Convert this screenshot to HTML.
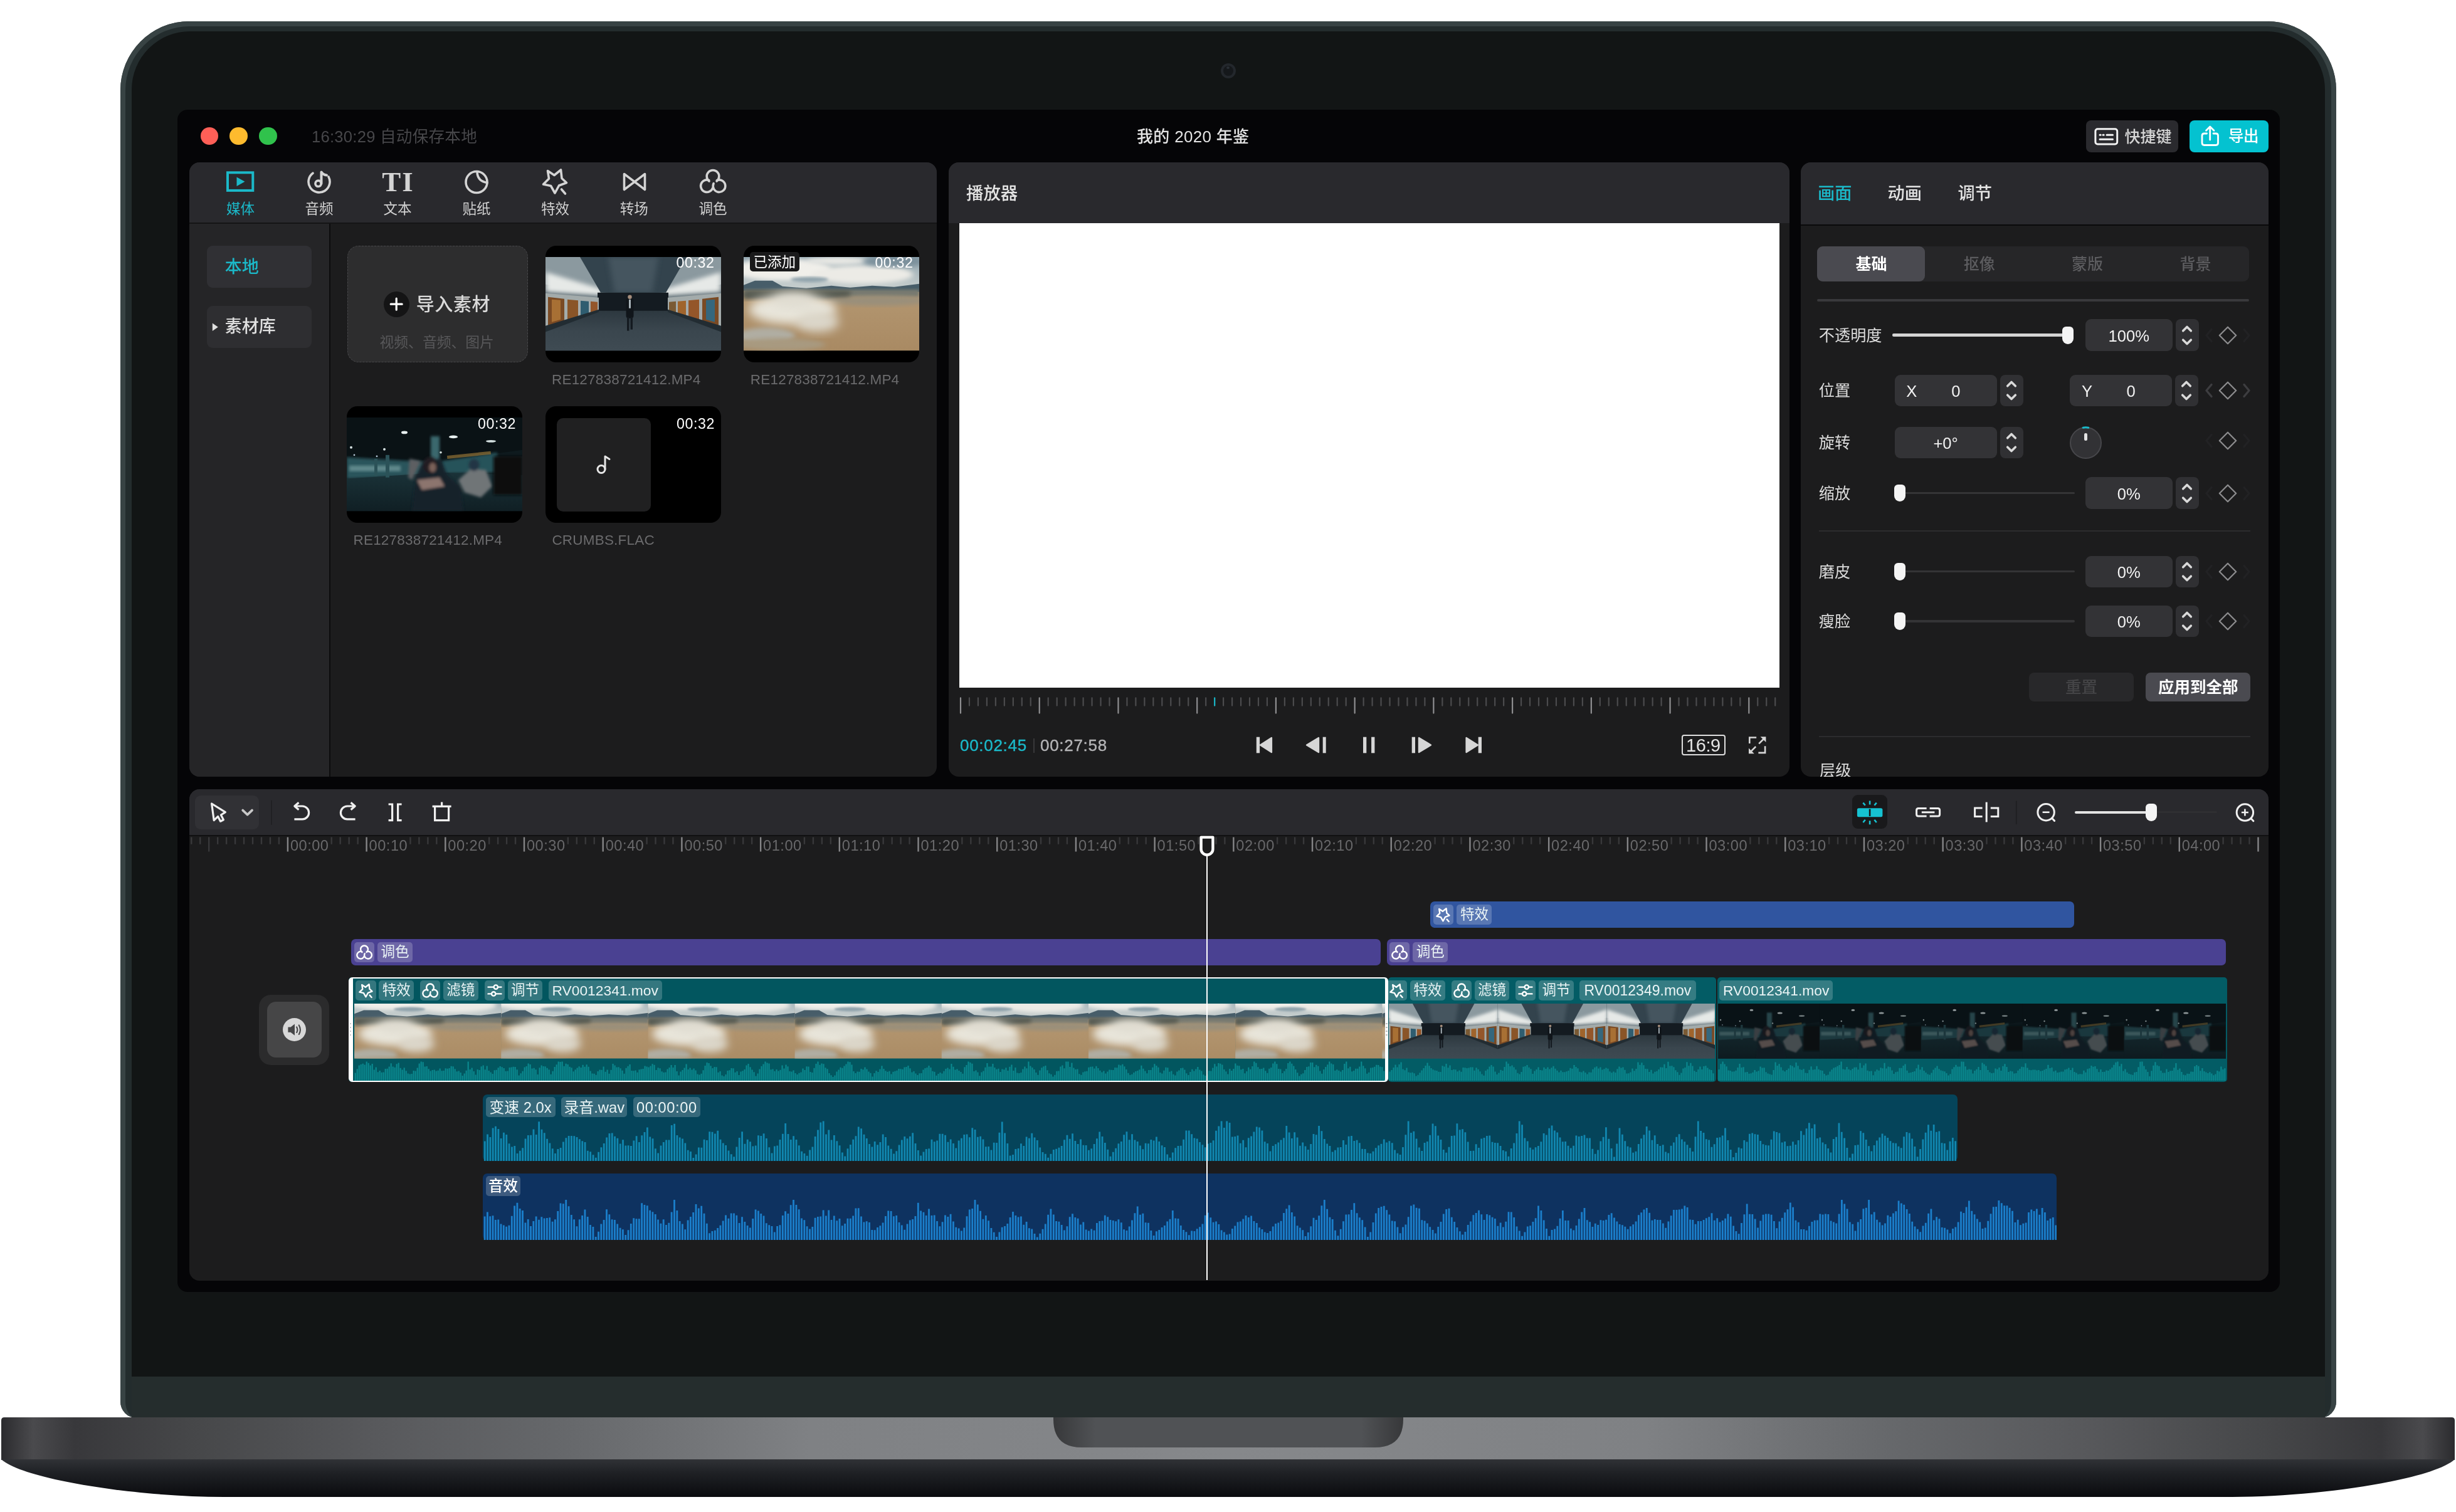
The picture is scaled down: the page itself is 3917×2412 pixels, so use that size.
<!DOCTYPE html>
<html lang="zh-CN"><head><meta charset="utf-8"><title>我的 2020 年鉴</title>
<style>
html,body{margin:0;padding:0;background:#fff;}
#root{position:relative;width:3917px;height:2412px;overflow:hidden;background:transparent;will-change:transform;font-family:"Liberation Sans","Noto Sans CJK SC",sans-serif;}
#root div,#root svg{position:absolute;box-sizing:border-box;}
.t{white-space:nowrap;}
.ic{overflow:visible;}
</style></head><body>
<div id="root">
<div style="left:192.0px;top:34.0px;width:3534.0px;height:2228.0px;background:linear-gradient(90deg,#3a4546 0,#3a4546 8px,#232c2d 8px,#232c2d 18px,#232c2d calc(100% - 18px),#384344 calc(100% - 8px),#384344 100%);border-radius:110px 110px 26px 26px;"></div><div style="left:192.0px;top:34.0px;width:3534.0px;height:2228.0px;border-radius:110px 110px 26px 26px;border-top:8px solid #384344;border-left:8px solid #384344;border-right:8px solid #384344;border-bottom:0;background:#232c2d;"></div><div style="left:210.0px;top:50.0px;width:3498.0px;height:2146.0px;background:#121515;border-radius:93px 93px 0 0;"></div><div style="left:210.0px;top:2196.0px;width:3498.0px;height:66.0px;background:#252d2d;"></div><div style="left:283.0px;top:175.0px;width:3353.0px;height:1886.0px;background:#050507;border-radius:16px;"></div><div style="left:1946.5px;top:101.0px;width:24.0px;height:24.0px;border-radius:50%;background:#15181b;border:4px solid #23272c;"></div><div style="left:1955.5px;top:106.0px;width:5.0px;height:4.0px;border-radius:50%;background:#2a2f35;"></div><svg style="left:0;top:2255px;" width="3917" height="157" viewBox="0 2255 3917 157">
<defs>
<linearGradient id="bu" x1="0" x2="1" y1="0" y2="0"><stop offset="0.000" stop-color="#2b2b2e"/><stop offset="0.013" stop-color="#4a4a4d"/><stop offset="0.030" stop-color="#38383b"/><stop offset="0.077" stop-color="#464749"/><stop offset="0.153" stop-color="#58595c"/><stop offset="0.230" stop-color="#66686b"/><stop offset="0.330" stop-color="#7f8184"/><stop offset="0.500" stop-color="#86888b"/><stop offset="0.670" stop-color="#7f8184"/><stop offset="0.770" stop-color="#66686b"/><stop offset="0.847" stop-color="#58595c"/><stop offset="0.923" stop-color="#464749"/><stop offset="0.970" stop-color="#38383b"/><stop offset="0.987" stop-color="#4a4a4d"/><stop offset="1.000" stop-color="#2b2b2e"/></linearGradient>
<linearGradient id="bl" x1="0" x2="0" y1="0" y2="1">
<stop offset="0" stop-color="#303236"/><stop offset="0.35" stop-color="#1f2125"/><stop offset="1" stop-color="#0a0b0e"/>
</linearGradient>
<linearGradient id="nt" x1="0" x2="1" y1="0" y2="0">
<stop offset="0" stop-color="#37383a"/><stop offset="0.12" stop-color="#505255"/><stop offset="0.88" stop-color="#505255"/><stop offset="1" stop-color="#37383a"/>
</linearGradient>
</defs>
<path d="M2 2266 Q2 2261 7 2261 H3910 Q3915 2261 3915 2266 V2329 H2 Z" fill="url(#bu)"/>
<path d="M2 2328 H3915 C3880 2360 3700 2388 3560 2388 H357 C217 2388 37 2360 2 2328 Z" fill="url(#bl)"/>
<path d="M1680 2261 H2238 V2264 Q2238 2309 2193 2309 H1725 Q1680 2309 1680 2264 Z" fill="url(#nt)"/>
</svg><svg width="0" height="0" style="left:0;top:0"><defs>
<filter id="b2" x="-20%" y="-20%" width="140%" height="140%"><feGaussianBlur stdDeviation="2"/></filter>
<filter id="b4" x="-20%" y="-20%" width="140%" height="140%"><feGaussianBlur stdDeviation="4"/></filter>
<filter id="b8" x="-30%" y="-30%" width="160%" height="160%"><feGaussianBlur stdDeviation="8"/></filter>
<linearGradient id="tsky" x1="0" x2="0" y1="0" y2="1"><stop offset="0" stop-color="#44545e"/><stop offset="1" stop-color="#5a6a72"/></linearGradient>
<linearGradient id="tfloor" x1="0" x2="0" y1="0" y2="1"><stop offset="0" stop-color="#2c373e"/><stop offset="0.5" stop-color="#3a464e"/><stop offset="1" stop-color="#3f4b53"/></linearGradient>
<linearGradient id="dsky" x1="0" x2="0" y1="0" y2="1"><stop offset="0" stop-color="#8fa3ad"/><stop offset="1" stop-color="#c9d0cf"/></linearGradient>
<linearGradient id="dgr" x1="0" x2="0" y1="0" y2="1"><stop offset="0" stop-color="#8d8676"/><stop offset="0.4" stop-color="#b39670"/><stop offset="1" stop-color="#a98a63"/></linearGradient>
<linearGradient id="gfl" x1="0" x2="0" y1="0" y2="1"><stop offset="0" stop-color="#1a3238"/><stop offset="1" stop-color="#101f24"/></linearGradient>
<symbol id="tunnel" viewBox="0 0 280 150" preserveAspectRatio="none">
<rect width="280" height="150" fill="#3f4b53"/>
<rect width="280" height="70" fill="url(#tsky)"/>
<polygon points="0,0 60,0 92,58 0,44" fill="#8b999f"/>
<polygon points="280,0 220,0 188,58 280,44" fill="#8b999f"/>
<polygon points="0,24 92,52 92,62 0,56" fill="#e6e9e7" filter="url(#b4)"/>
<polygon points="280,24 188,52 188,62 280,56" fill="#e6e9e7" filter="url(#b4)"/>
<polygon points="55,0 225,0 192,57 88,57" fill="#33434d"/>
<polygon points="100,0 180,0 170,57 110,57" fill="#44555f" filter="url(#b4)"/>
<polygon points="0,100 95,84 185,84 280,100 280,150 0,150" fill="url(#tfloor)"/>
<rect x="83" y="57" width="113" height="29" fill="#141b21"/>
<polygon points="0,58 85,65 85,86 0,116" fill="#a3abab"/>
<polygon points="280,58 195,65 195,86 280,116" fill="#a3abab"/>
<polygon points="4,64 30,67 30,102 4,110" fill="#7a4a24"/><polygon points="10,68 24,69 24,100 10,104" fill="#a87034"/><polygon points="35,68 52,69.5 52,95 35,100" fill="#8a5528"/><polygon points="56,70 69,71 69,90 56,94" fill="#2f5d70"/><polygon points="72,71 83,72 83,86 72,89" fill="#94562a"/>
<polygon points="276,64 250,67 250,102 276,110" fill="#7a4a24"/><polygon points="270,68 256,69 256,100 270,104" fill="#35677d"/><polygon points="245,68 228,69.5 228,95 245,100" fill="#94562a"/><polygon points="224,70 211,71 211,90 224,94" fill="#a0642c"/><polygon points="208,71 197,72 197,86 208,89" fill="#7a5a34"/>
<polygon points="0,110 85,84 85,88 0,120" fill="#222c32"/><polygon points="280,110 195,84 195,88 280,120" fill="#222c32"/>
<rect x="128.5" y="66" width="12" height="32" rx="4" fill="#10151a"/><rect x="130" y="96" width="3.4" height="22" fill="#141a20"/><rect x="135.6" y="96" width="3.4" height="20" fill="#141a20"/>
<rect x="133" y="68" width="3" height="14" fill="#aab4ba"/>
<circle cx="134.5" cy="64" r="3.2" fill="#a58d7c"/>
</symbol>
<symbol id="desert" viewBox="0 0 280 150" preserveAspectRatio="none">
<rect width="280" height="150" fill="url(#dgr)"/>
<rect width="280" height="52" fill="url(#dsky)"/>
<ellipse cx="60" cy="20" rx="80" ry="18" fill="#f0efea" filter="url(#b4)"/>
<ellipse cx="190" cy="28" rx="80" ry="15" fill="#ecebe6" filter="url(#b4)"/>
<ellipse cx="150" cy="6" rx="50" ry="7" fill="#e8e8e4" filter="url(#b4)"/>
<ellipse cx="240" cy="7" rx="50" ry="9" fill="#7b909b" filter="url(#b4)"/>
<ellipse cx="105" cy="36" rx="30" ry="4" fill="#8fa2ab" filter="url(#b2)"/>
<polygon points="0,54 0,45 18,38 46,38 62,47 100,50 140,46 170,49 205,46 240,48 280,43 280,56" fill="#475d69"/>
<rect y="52" width="280" height="12" fill="#77796f" filter="url(#b2)"/><rect y="54" width="170" height="14" fill="#55584f" filter="url(#b4)"/>
<ellipse cx="215" cy="70" rx="80" ry="8" fill="#9a8f7a" filter="url(#b4)"/>
<ellipse cx="78" cy="84" rx="70" ry="24" fill="#e8e5da" filter="url(#b8)"/>
<ellipse cx="80" cy="70" rx="34" ry="12" fill="#e0ddd2" filter="url(#b8)"/>
<ellipse cx="118" cy="104" rx="34" ry="16" fill="#dcd7ca" filter="url(#b8)"/>
<ellipse cx="36" cy="126" rx="46" ry="13" fill="#b0ada2" filter="url(#b4)"/>
<ellipse cx="60" cy="140" rx="70" ry="10" fill="#a89a80" filter="url(#b4)"/>
</symbol>
<symbol id="garage" viewBox="0 0 280 150" preserveAspectRatio="none">
<rect width="280" height="150" fill="#0e1a1e"/>
<polygon points="0,0 280,0 280,52 150,70 0,62" fill="#0a1215"/>
<polygon points="0,64 135,72 135,92 0,98" fill="#2a555b" filter="url(#b2)"/>
<polygon points="150,70 240,56 240,88 150,90" fill="#27525a" filter="url(#b2)"/>
<polygon points="0,98 150,88 280,92 280,150 0,150" fill="url(#gfl)"/>
<rect x="4" y="77" width="82" height="9" fill="#a9cfcd" opacity="0.42" filter="url(#b2)"/>
<rect x="134" y="30" width="14" height="64" fill="#3b676d" filter="url(#b2)"/>
<rect x="62" y="60" width="6" height="36" fill="#2b5258"/><rect x="44" y="66" width="5" height="28" fill="#2b5258"/>
<rect x="160" y="57" width="70" height="5" fill="#8a6c34" opacity="0.75" transform="rotate(-6 200 60)"/>
<ellipse cx="92" cy="24" rx="5" ry="2.4" fill="#e8f0f0"/><ellipse cx="170" cy="31" rx="7" ry="2.4" fill="#e8f0f0"/><ellipse cx="230" cy="38" rx="8" ry="1.8" fill="#d4e0e0"/>
<circle cx="7" cy="48" r="2" fill="#d4e0e0"/><circle cx="60" cy="51" r="2" fill="#d4e0e0"/><circle cx="12" cy="60" r="1.4" fill="#bcd"/><circle cx="48" cy="62" r="1.4" fill="#bcd"/><circle cx="150" cy="56" r="1.8" fill="#d4e0e0"/>
<g filter="url(#b2)">
<polygon points="104,100 118,70 100,66 98,96" fill="#5d5f62"/>
<polygon points="110,96 122,70 150,66 160,92 182,112 186,150 104,150" fill="#18232b"/>
<ellipse cx="133" cy="76" rx="11" ry="13" fill="#241c20"/><ellipse cx="137" cy="80" rx="5.5" ry="7.5" fill="#7c625a"/>
<polygon points="112,100 148,96 156,110 120,116" fill="#8c746e"/>
<polygon points="178,100 198,82 222,84 232,110 214,128 188,120" fill="#6f7477"/><ellipse cx="203" cy="76" rx="8.5" ry="9.5" fill="#243444"/>
</g>
<rect x="234" y="62" width="46" height="62" fill="#080d10" filter="url(#b2)"/>
</symbol>
</defs></svg><div style="left:319.7px;top:202.7px;width:28.8px;height:28.8px;border-radius:50%;background:#fe5f57;"></div><div style="left:366.3px;top:202.7px;width:28.8px;height:28.8px;border-radius:50%;background:#febb2e;"></div><div style="left:413.0px;top:202.7px;width:28.8px;height:28.8px;border-radius:50%;background:#30c24c;"></div><div class="t" style="top:199.5px;font-size:25.6px;line-height:36px;color:#47474a;font-weight:400;white-space:nowrap;letter-spacing:0.25px;left:497.0px;">16:30:29 自动保存本地</div><div class="t" style="top:199.5px;font-size:26px;line-height:36px;color:#e4e4e4;font-weight:500;white-space:nowrap;letter-spacing:0.3px;left:902.7px;width:2000px;text-align:center;">我的 2020 年鉴</div><div style="left:3327.0px;top:192.2px;width:146.7px;height:50.8px;background:#2a2a2e;border-radius:8px;"></div><svg class="ic" style="left:3338px;top:202px" width="42" height="32" viewBox="0 0 42 32" fill="none" stroke="#f2f2f2" stroke-width="3" stroke-linecap="round">
<rect x="3.9" y="3.7" width="34.8" height="24.3" rx="3.5"/><path d="M11 13.3h1.2M16 13.3h1.2M22 13.3h9.5M11 20.2h20.5"/></svg><div class="t" style="top:200.5px;font-size:25px;line-height:35px;color:#d6d6d6;font-weight:500;white-space:nowrap;left:3388.6px;">快捷键</div><div style="left:3492.2px;top:192.2px;width:125.7px;height:50.8px;background:#04c2d0;border-radius:8px;"></div><svg class="ic" style="left:3508px;top:198px" width="34" height="38" viewBox="0 0 34 38" fill="none" stroke="#fff" stroke-width="2.8" stroke-linecap="round" stroke-linejoin="round">
<path d="M11.5 15H7.5Q4 15 4 18.5V30Q4 33.5 7.5 33.5H26Q29.5 33.5 29.5 30V18.5Q29.5 15 26 15H22"/><path d="M16.7 25V4.5M10.5 10.2L16.7 4L23 10.2"/></svg><div class="t" style="top:201.0px;font-size:24.5px;line-height:34px;color:#fff;font-weight:500;white-space:nowrap;letter-spacing:-0.5px;left:3554.0px;">导出</div><div style="left:301.6px;top:259.4px;width:1192.4px;height:979.5px;background:#1c1c1d;border-radius:16px;overflow:hidden;"><div style="left:0.0px;top:0.0px;width:1192.4px;height:95.6px;background:#29292d;"></div><div style="left:0.0px;top:95.6px;width:1192.4px;height:2.0px;background:#141415;"></div><div style="left:0.0px;top:97.6px;width:223.4px;height:882.4px;background:#252527;"></div><div style="left:223.4px;top:97.6px;width:2.2px;height:882.4px;background:#0c0c0d;"></div></div><div class="t" style="top:317.9px;font-size:22.5px;line-height:31px;color:#1bb9c9;font-weight:400;white-space:nowrap;left:-616.5px;width:2000px;text-align:center;">媒体</div><div class="t" style="top:317.9px;font-size:22.5px;line-height:31px;color:#d2d2d2;font-weight:400;white-space:nowrap;left:-491.0px;width:2000px;text-align:center;">音频</div><div class="t" style="top:317.9px;font-size:22.5px;line-height:31px;color:#d2d2d2;font-weight:400;white-space:nowrap;left:-366.0px;width:2000px;text-align:center;">文本</div><div class="t" style="top:317.9px;font-size:22.5px;line-height:31px;color:#d2d2d2;font-weight:400;white-space:nowrap;left:-240.0px;width:2000px;text-align:center;">贴纸</div><div class="t" style="top:317.9px;font-size:22.5px;line-height:31px;color:#d2d2d2;font-weight:400;white-space:nowrap;left:-114.5px;width:2000px;text-align:center;">特效</div><div class="t" style="top:317.9px;font-size:22.5px;line-height:31px;color:#d2d2d2;font-weight:400;white-space:nowrap;left:11.3px;width:2000px;text-align:center;">转场</div><div class="t" style="top:317.9px;font-size:22.5px;line-height:31px;color:#d2d2d2;font-weight:400;white-space:nowrap;left:137.0px;width:2000px;text-align:center;">调色</div><svg class="ic" style="left:359px;top:271px" width="50" height="38" viewBox="359 271 50 38"><rect x="363" y="275.3" width="40.3" height="28.6" fill="none" stroke="#1bb9c9" stroke-width="4"/><path d="M377.5 282.5L390.5 289.7L377.5 297Z" fill="#1bb9c9"/></svg><svg class="ic" style="left:487px;top:268px" width="44" height="44" viewBox="-22 -22 44 44" fill="none" stroke="#d4d4d4" stroke-width="3.6" stroke-linecap="round" stroke-linejoin="round"><path d="M-10 -13.75A17 17 0 1 0 15 -8"/><circle cx="-1.4" cy="2.8" r="4.7"/><path d="M3.5 2.8V-15.6Q6.5 -11 12 -10.4" stroke-width="4"/></svg><div class="t" style="top:264.6px;font-size:45px;line-height:50px;color:#d4d4d4;font-weight:700;white-space:nowrap;font-family:'Liberation Serif',serif;letter-spacing:2px;left:-365.0px;width:2000px;text-align:center;">TI</div><svg class="ic" style="left:738px;top:268px" width="44" height="44" viewBox="-22 -22 44 44" fill="none" stroke="#d4d4d4" stroke-width="3.6" stroke-linecap="round"><circle cx="0" cy="0.5" r="17"/><path d="M1 -16.5Q1 -1 17 1.5"/></svg><svg class="ic" style="left:863px;top:266px" width="46" height="46" viewBox="-23 -23 46 46" fill="none" stroke="#d4d4d4" stroke-width="3.6" stroke-linejoin="round" stroke-linecap="round"><path d="M-12.5 -16.5L-2 -9.5L8.5 -18L10 -4.5L17.5 2.5L5.5 7L-1 19L-7.5 7.5L-19.5 5L-10.5 -4Z"/><path d="M9.5 13L15.5 20"/></svg><svg class="ic" style="left:989px;top:268px" width="46" height="44" viewBox="-23 -22 46 44" fill="none" stroke="#d4d4d4" stroke-width="3.6" stroke-linejoin="round"><path d="M-16.5 -12.5L16.5 12.5V-12.5L-16.5 12.5Z"/></svg><svg class="ic" style="left:1114px;top:266px" width="46" height="46" viewBox="-23 -23 46 46" fill="none" stroke="#d4d4d4" stroke-width="3.6" stroke-linecap="round"><path d="M-6.03 0.02A9.8 9.8 0 1 1 6.03 0.02M-0.28 10.73A9.8 9.8 0 1 1 -6.25 -1.51M6.33 -1.39A9.8 9.8 0 1 1 1.12 3.56"/></svg><div style="left:329.6px;top:392.1px;width:167.6px;height:66.8px;background:#303034;border-radius:9px;"></div><div style="left:329.6px;top:487.9px;width:167.6px;height:66.8px;background:#2e2e31;border-radius:9px;"></div><div class="t" style="top:406.5px;font-size:27px;line-height:38px;color:#1bb9c9;font-weight:500;white-space:nowrap;left:358.8px;">本地</div><div class="t" style="top:502.3px;font-size:27px;line-height:38px;color:#e0e0e0;font-weight:500;white-space:nowrap;left:358.8px;">素材库</div><svg class="ic" style="left:338px;top:514px" width="12" height="16" viewBox="0 0 12 16"><path d="M0.8 1.6L9.8 7.8L0.8 14Z" fill="#e0e0e0"/></svg><div style="left:553.5px;top:392.1px;width:288.5px;height:185.8px;background:#2d2d2e;border-radius:18px;border:1.6px dashed #47474a;"></div><div style="left:611.7px;top:464.6px;width:41.0px;height:41.0px;background:#141415;border-radius:50%;"></div><svg class="ic" style="left:620px;top:473px" width="24" height="24" viewBox="0 0 24 24" stroke="#fff" stroke-width="3.2" stroke-linecap="round"><path d="M12.2 3.2V21.2M3.2 12.2H21.2"/></svg><div class="t" style="top:465.5px;font-size:29px;line-height:41px;color:#dadada;font-weight:500;white-space:nowrap;letter-spacing:0.6px;left:663.7px;">导入素材</div><div class="t" style="top:529.6px;font-size:22.8px;line-height:32px;color:#58585a;font-weight:400;white-space:nowrap;left:605.5px;">视频、音频、图片</div><div style="left:869.6px;top:392.1px;width:280.0px;height:186.0px;background:#000;border-radius:17px;overflow:hidden;"><svg style="left:0.0px;top:18.3px;" width="280.0" height="149.5" viewBox="0 0 280 150" preserveAspectRatio="none"><use href="#tunnel" width="280" height="150"/></svg></div><div class="t" style="top:403.4px;font-size:23.2px;line-height:32px;color:#fff;font-weight:400;white-space:nowrap;letter-spacing:0.6px;left:-860.4px;width:2000px;text-align:right;">00:32</div><div class="t" style="top:589.6px;font-size:22.5px;line-height:31px;color:#6b6b6d;font-weight:400;white-space:nowrap;letter-spacing:0.2px;left:880.0px;">RE127838721412.MP4</div><div style="left:1186.4px;top:392.1px;width:280.0px;height:186.0px;background:#000;border-radius:17px;overflow:hidden;"><svg style="left:0.0px;top:18.3px;" width="280.0" height="149.5" viewBox="0 0 280 150" preserveAspectRatio="none"><use href="#desert" width="280" height="150"/></svg></div><div class="t" style="top:403.4px;font-size:23.2px;line-height:32px;color:#fff;font-weight:400;white-space:nowrap;letter-spacing:0.6px;left:-543.6px;width:2000px;text-align:right;">00:32</div><div style="left:1196.0px;top:402.3px;width:79.0px;height:31.2px;background:#1a1a1b;border-radius:5px;"></div><div class="t" style="top:403.3px;font-size:22.6px;line-height:32px;color:#fff;font-weight:400;white-space:nowrap;left:1201.4px;">已添加</div><div class="t" style="top:589.6px;font-size:22.5px;line-height:31px;color:#6b6b6d;font-weight:400;white-space:nowrap;letter-spacing:0.2px;left:1196.8px;">RE127838721412.MP4</div><div style="left:553.1px;top:648.2px;width:280.0px;height:186.0px;background:#000;border-radius:17px;overflow:hidden;"><svg style="left:0.0px;top:18.3px;" width="280.0" height="149.5" viewBox="0 0 280 150" preserveAspectRatio="none"><use href="#garage" width="280" height="150"/></svg></div><div class="t" style="top:659.5px;font-size:23.2px;line-height:32px;color:#fff;font-weight:400;white-space:nowrap;letter-spacing:0.6px;left:-1176.9px;width:2000px;text-align:right;">00:32</div><div class="t" style="top:845.7px;font-size:22.5px;line-height:31px;color:#6b6b6d;font-weight:400;white-space:nowrap;letter-spacing:0.2px;left:563.5px;">RE127838721412.MP4</div><div style="left:870.0px;top:648.2px;width:280.0px;height:186.0px;background:#000;border-radius:17px;overflow:hidden;"><div style="left:18.4px;top:18.5px;width:149.5px;height:149.5px;background:#202021;border-radius:10px;"></div><svg class="ic" style="left:76px;top:76px" width="32" height="36" viewBox="-16 -18 32 36" fill="none" stroke="#e6e6e6" stroke-width="3" stroke-linecap="round" stroke-linejoin="round"><circle cx="-3" cy="6.5" r="6"/><path d="M3 6.5V-14L10 -9.5"/></svg></div><div class="t" style="top:659.5px;font-size:23.2px;line-height:32px;color:#fff;font-weight:400;white-space:nowrap;letter-spacing:0.6px;left:-860.0px;width:2000px;text-align:right;">00:32</div><div class="t" style="top:845.7px;font-size:22.5px;line-height:31px;color:#6b6b6d;font-weight:400;white-space:nowrap;letter-spacing:0.2px;left:880.4px;">CRUMBS.FLAC</div><div style="left:1513.0px;top:259.4px;width:1340.7px;height:979.5px;background:#1c1c1d;border-radius:16px;overflow:hidden;"><div style="left:0.0px;top:0.0px;width:1340.7px;height:96.6px;background:#29292d;"></div><div style="left:16.8px;top:96.6px;width:1308.2px;height:740.7px;background:#fff;"></div></div><div class="t" style="top:290.0px;font-size:27.4px;line-height:38px;color:#e4e4e4;font-weight:500;white-space:nowrap;left:1541.0px;">播放器</div><svg style="left:1513px;top:1105px" width="1341" height="40" viewBox="1513 1105 1341 40" fill="none" stroke-width="2.2" stroke-linecap="round"><path d="M1545.97 1113.4V1125.6M1559.94 1113.4V1125.6M1573.91 1113.4V1125.6M1587.88 1113.4V1125.6M1601.85 1113.4V1125.6M1615.82 1113.4V1125.6M1629.79 1113.4V1125.6M1643.76 1113.4V1125.6M1671.70 1113.4V1125.6M1685.67 1113.4V1125.6M1699.64 1113.4V1125.6M1713.61 1113.4V1125.6M1727.58 1113.4V1125.6M1741.55 1113.4V1125.6M1755.52 1113.4V1125.6M1769.49 1113.4V1125.6M1797.43 1113.4V1125.6M1811.40 1113.4V1125.6M1825.37 1113.4V1125.6M1839.34 1113.4V1125.6M1853.31 1113.4V1125.6M1867.28 1113.4V1125.6M1881.25 1113.4V1125.6M1895.22 1113.4V1125.6M1923.16 1113.4V1125.6M1951.10 1113.4V1125.6M1965.07 1113.4V1125.6M1979.04 1113.4V1125.6M1993.01 1113.4V1125.6M2006.98 1113.4V1125.6M2020.95 1113.4V1125.6M2048.89 1113.4V1125.6M2062.86 1113.4V1125.6M2076.83 1113.4V1125.6M2090.80 1113.4V1125.6M2104.77 1113.4V1125.6M2118.74 1113.4V1125.6M2132.71 1113.4V1125.6M2146.68 1113.4V1125.6M2174.62 1113.4V1125.6M2188.59 1113.4V1125.6M2202.56 1113.4V1125.6M2216.53 1113.4V1125.6M2230.50 1113.4V1125.6M2244.47 1113.4V1125.6M2258.44 1113.4V1125.6M2272.41 1113.4V1125.6M2300.35 1113.4V1125.6M2314.32 1113.4V1125.6M2328.29 1113.4V1125.6M2342.26 1113.4V1125.6M2356.23 1113.4V1125.6M2370.20 1113.4V1125.6M2384.17 1113.4V1125.6M2398.14 1113.4V1125.6M2426.08 1113.4V1125.6M2440.05 1113.4V1125.6M2454.02 1113.4V1125.6M2467.99 1113.4V1125.6M2481.96 1113.4V1125.6M2495.93 1113.4V1125.6M2509.90 1113.4V1125.6M2523.87 1113.4V1125.6M2551.81 1113.4V1125.6M2565.78 1113.4V1125.6M2579.75 1113.4V1125.6M2593.72 1113.4V1125.6M2607.69 1113.4V1125.6M2621.66 1113.4V1125.6M2635.63 1113.4V1125.6M2649.60 1113.4V1125.6M2677.54 1113.4V1125.6M2691.51 1113.4V1125.6M2705.48 1113.4V1125.6M2719.45 1113.4V1125.6M2733.42 1113.4V1125.6M2747.39 1113.4V1125.6M2761.36 1113.4V1125.6M2775.33 1113.4V1125.6M2803.27 1113.4V1125.6M2817.24 1113.4V1125.6M2831.21 1113.4V1125.6" stroke="#4b4b4d"/><path d="M1532.00 1113.4V1137.6M1657.73 1113.4V1137.6M1783.46 1113.4V1137.6M1909.19 1113.4V1137.6M2034.92 1113.4V1137.6M2160.65 1113.4V1137.6M2286.38 1113.4V1137.6M2412.11 1113.4V1137.6M2537.84 1113.4V1137.6M2663.57 1113.4V1137.6M2789.30 1113.4V1137.6" stroke="#8f8f91"/><path d="M1937.2 1113.4V1125.6" stroke="#1bb9c9"/></svg><div class="t" style="top:1170.8px;font-size:26px;line-height:36px;color:#1bb9c9;font-weight:400;white-space:nowrap;letter-spacing:0.7px;-webkit-text-stroke:0.4px #1bb9c9;left:1531.0px;">00:02:45</div><div style="left:1648.0px;top:1178.0px;width:1.8px;height:23.0px;background:#38383a;"></div><div class="t" style="top:1170.8px;font-size:26px;line-height:36px;color:#b4b4b6;font-weight:400;white-space:nowrap;letter-spacing:0.7px;-webkit-text-stroke:0.4px #b4b4b6;left:1659.0px;">00:27:58</div><svg class="ic" style="left:1990px;top:1168px" width="400" height="42" viewBox="1990 1168 400 42" fill="#d6d6d6" stroke="#d6d6d6" stroke-linejoin="round" stroke-width="2.4">
<path d="M2027.9 1177V1200L2010 1188.5Z"/><rect x="2003.8" y="1175.7" width="5.3" height="25.6" stroke="none"/>
<path d="M2103 1177V1200L2084 1188.5Z"/><rect x="2109.7" y="1175.7" width="5" height="25.6" stroke="none"/>
<rect x="2174" y="1175.7" width="5.3" height="25.6" stroke="none"/><rect x="2187.1" y="1175.7" width="5.3" height="25.6" stroke="none"/>
<path d="M2263 1177V1200L2282 1188.5Z"/><rect x="2251.7" y="1175.7" width="5.3" height="25.6" stroke="none"/>
<path d="M2338.6 1177V1200L2356.8 1188.5Z"/><rect x="2357.7" y="1175.7" width="5.3" height="25.6" stroke="none"/>
</svg><div style="left:2681.8px;top:1172.0px;width:69.8px;height:33.0px;border:2.9px solid #dedede;border-radius:4px;"></div><div class="t" style="top:1171.9px;font-size:29px;line-height:34px;color:#e4e4e4;font-weight:400;white-space:nowrap;letter-spacing:-0.4px;left:1716.4px;width:2000px;text-align:center;">16:9</div><svg class="ic" style="left:2785px;top:1170px" width="36" height="36" viewBox="2785 1170 36 36" fill="none" stroke="#d6d6d6" stroke-width="2.6" stroke-linecap="butt" stroke-linejoin="miter">
<path d="M2790.3 1186V1176.5H2801.2M2815.1 1190.2V1200.9H2804.4"/><path d="M2813.6 1178L2805.2 1186.4M2791.8 1199.4L2800.2 1191"/>
<path d="M2816.4 1175.2H2807.6L2816.4 1184ZM2789 1202.2H2797.8L2789 1193.4Z" fill="#d6d6d6" stroke="none"/></svg><div style="left:2872.0px;top:259.4px;width:745.8px;height:979.5px;background:#1c1c1d;border-radius:16px;overflow:hidden;"><div style="left:0.0px;top:0.0px;width:745.8px;height:98.2px;background:#29292d;"></div><div style="left:0.0px;top:98.2px;width:745.8px;height:2.2px;background:#0a0a0b;"></div></div><div class="t" style="top:290.0px;font-size:27.2px;line-height:38px;color:#1bb9c9;font-weight:500;white-space:nowrap;left:2899.0px;">画面</div><div class="t" style="top:290.0px;font-size:27.2px;line-height:38px;color:#e4e4e4;font-weight:500;white-space:nowrap;left:3010.6px;">动画</div><div class="t" style="top:290.0px;font-size:27.2px;line-height:38px;color:#e4e4e4;font-weight:500;white-space:nowrap;left:3122.5px;">调节</div><div style="left:2898.3px;top:393.0px;width:689.1px;height:55.5px;background:#262628;border-radius:9px;"></div><div style="left:2898.3px;top:393.0px;width:172.1px;height:55.5px;background:#4a4a50;border-radius:9px;"></div><div class="t" style="top:404.3px;font-size:25px;line-height:35px;color:#fff;font-weight:700;white-space:nowrap;left:1984.5px;width:2000px;text-align:center;">基础</div><div class="t" style="top:404.3px;font-size:25px;line-height:35px;color:#5c5c5f;font-weight:500;white-space:nowrap;left:2156.8px;width:2000px;text-align:center;">抠像</div><div class="t" style="top:404.3px;font-size:25px;line-height:35px;color:#5c5c5f;font-weight:500;white-space:nowrap;left:2329.1px;width:2000px;text-align:center;">蒙版</div><div class="t" style="top:404.3px;font-size:25px;line-height:35px;color:#5c5c5f;font-weight:500;white-space:nowrap;left:2501.4px;width:2000px;text-align:center;">背景</div><div style="left:2898.3px;top:476.6px;width:689.1px;height:4.2px;background:#39393c;border-radius:2px;"></div><div class="t" style="top:517.7px;font-size:25.2px;line-height:35px;color:#dcdcdc;font-weight:400;white-space:nowrap;left:2900.8px;">不透明度</div><div style="left:3018.4px;top:532.4px;width:279.6px;height:4.4px;background:#d4d4d4;border-radius:2.2px;"></div><div style="left:3288.6px;top:520.8px;width:18.0px;height:27.8px;background:#f4f4f4;border-radius:6px 6px 9px 9px;"></div><div style="left:3325.7px;top:509.2px;width:139.3px;height:50.8px;background:#333336;border-radius:9px;"></div><div class="t" style="top:517.8px;font-size:25.6px;line-height:36px;color:#f2f2f2;font-weight:400;white-space:nowrap;left:2395.3px;width:2000px;text-align:center;">100%</div><div style="left:3469.8px;top:509.2px;width:37.2px;height:50.8px;background:#303033;border-radius:8px;"></div><svg class="ic" style="left:3476.4px;top:514.6px" width="24" height="40" viewBox="-12 -20 24 40" fill="none" stroke="#dadada" stroke-width="3.6" stroke-linecap="round" stroke-linejoin="round"><path d="M-6.3 -7.2L0 -13.5L6.3 -7.2M-6.3 7.2L0 13.5L6.3 7.2"/></svg><svg class="ic" style="left:3512px;top:516.6px" width="82" height="36" viewBox="-41 -18 82 36" fill="none" stroke-linecap="round" stroke-linejoin="round"><path d="M0 -13.2L13.2 0L0 13.2L-13.2 0Z" stroke="#8c8c8e" stroke-width="2.3"/><path d="M-26 -9.5L-34 0L-26 9.5M26 -9.5L34 0L26 9.5" stroke="#222224" stroke-width="3.4"/></svg><div class="t" style="top:606.2px;font-size:25.2px;line-height:35px;color:#dcdcdc;font-weight:400;white-space:nowrap;left:2900.8px;">位置</div><div style="left:3021.6px;top:597.7px;width:163.0px;height:50.8px;background:#333336;border-radius:9px;"></div><div class="t" style="top:606.3px;font-size:25.6px;line-height:36px;color:#f2f2f2;font-weight:400;white-space:nowrap;left:3040.3px;">X</div><div class="t" style="top:606.3px;font-size:25.6px;line-height:36px;color:#f2f2f2;font-weight:400;white-space:nowrap;left:2119.4px;width:2000px;text-align:center;">0</div><div style="left:3189.6px;top:597.7px;width:37.0px;height:50.8px;background:#303033;border-radius:8px;"></div><svg class="ic" style="left:3196.1px;top:603.1px" width="24" height="40" viewBox="-12 -20 24 40" fill="none" stroke="#dadada" stroke-width="3.6" stroke-linecap="round" stroke-linejoin="round"><path d="M-6.3 -7.2L0 -13.5L6.3 -7.2M-6.3 7.2L0 13.5L6.3 7.2"/></svg><div style="left:3301.0px;top:597.7px;width:163.0px;height:50.8px;background:#333336;border-radius:9px;"></div><div class="t" style="top:606.3px;font-size:25.6px;line-height:36px;color:#f2f2f2;font-weight:400;white-space:nowrap;left:3320.0px;">Y</div><div class="t" style="top:606.3px;font-size:25.6px;line-height:36px;color:#f2f2f2;font-weight:400;white-space:nowrap;left:2398.7px;width:2000px;text-align:center;">0</div><div style="left:3468.9px;top:597.7px;width:37.0px;height:50.8px;background:#303033;border-radius:8px;"></div><svg class="ic" style="left:3475.4px;top:603.1px" width="24" height="40" viewBox="-12 -20 24 40" fill="none" stroke="#dadada" stroke-width="3.6" stroke-linecap="round" stroke-linejoin="round"><path d="M-6.3 -7.2L0 -13.5L6.3 -7.2M-6.3 7.2L0 13.5L6.3 7.2"/></svg><svg class="ic" style="left:3512px;top:605.1px" width="82" height="36" viewBox="-41 -18 82 36" fill="none" stroke-linecap="round" stroke-linejoin="round"><path d="M0 -13.2L13.2 0L0 13.2L-13.2 0Z" stroke="#8c8c8e" stroke-width="2.3"/><path d="M-26 -9.5L-34 0L-26 9.5M26 -9.5L34 0L26 9.5" stroke="#3d3d40" stroke-width="3.4"/></svg><div class="t" style="top:689.1px;font-size:25.2px;line-height:35px;color:#dcdcdc;font-weight:400;white-space:nowrap;left:2900.8px;">旋转</div><div style="left:3021.6px;top:680.6px;width:163.0px;height:50.8px;background:#333336;border-radius:9px;"></div><div class="t" style="top:689.2px;font-size:25.6px;line-height:36px;color:#f2f2f2;font-weight:400;white-space:nowrap;left:2103.1px;width:2000px;text-align:center;">+0°</div><div style="left:3189.6px;top:680.6px;width:37.0px;height:50.8px;background:#303033;border-radius:8px;"></div><svg class="ic" style="left:3196.1px;top:686.0px" width="24" height="40" viewBox="-12 -20 24 40" fill="none" stroke="#dadada" stroke-width="3.6" stroke-linecap="round" stroke-linejoin="round"><path d="M-6.3 -7.2L0 -13.5L6.3 -7.2M-6.3 7.2L0 13.5L6.3 7.2"/></svg><div style="left:3301.1px;top:680.9px;width:50.8px;height:50.8px;background:#323235;border:2px solid #47474b;border-radius:50%;"></div><div style="left:3324.3px;top:691.3px;width:4.4px;height:11.3px;background:#e4e4e4;border-radius:2.2px;"></div><svg class="ic" style="left:3316px;top:676px" width="22" height="10" viewBox="3316 676 22 10" fill="none"><path d="M3322.2 682.3Q3326.5 681.2 3330.8 682.3" stroke="#1bb9c9" stroke-width="3" stroke-linecap="round"/></svg><svg class="ic" style="left:3512px;top:684.5px" width="82" height="36" viewBox="-41 -18 82 36" fill="none" stroke-linecap="round" stroke-linejoin="round"><path d="M0 -13.2L13.2 0L0 13.2L-13.2 0Z" stroke="#8c8c8e" stroke-width="2.3"/><path d="M-26 -9.5L-34 0L-26 9.5M26 -9.5L34 0L26 9.5" stroke="#222224" stroke-width="3.4"/></svg><div class="t" style="top:769.6px;font-size:25.2px;line-height:35px;color:#dcdcdc;font-weight:400;white-space:nowrap;left:2900.8px;">缩放</div><div style="left:3030.0px;top:784.9px;width:279.0px;height:3.2px;background:#343436;border-radius:2px;"></div><div style="left:3020.8px;top:772.7px;width:18.0px;height:27.8px;background:#f4f4f4;border-radius:6px 6px 9px 9px;"></div><div style="left:3325.7px;top:761.1px;width:139.3px;height:50.8px;background:#333336;border-radius:9px;"></div><div class="t" style="top:769.7px;font-size:25.6px;line-height:36px;color:#f2f2f2;font-weight:400;white-space:nowrap;left:2395.3px;width:2000px;text-align:center;">0%</div><div style="left:3469.8px;top:761.1px;width:37.2px;height:50.8px;background:#303033;border-radius:8px;"></div><svg class="ic" style="left:3476.4px;top:766.5px" width="24" height="40" viewBox="-12 -20 24 40" fill="none" stroke="#dadada" stroke-width="3.6" stroke-linecap="round" stroke-linejoin="round"><path d="M-6.3 -7.2L0 -13.5L6.3 -7.2M-6.3 7.2L0 13.5L6.3 7.2"/></svg><svg class="ic" style="left:3512px;top:768.5px" width="82" height="36" viewBox="-41 -18 82 36" fill="none" stroke-linecap="round" stroke-linejoin="round"><path d="M0 -13.2L13.2 0L0 13.2L-13.2 0Z" stroke="#8c8c8e" stroke-width="2.3"/><path d="M-26 -9.5L-34 0L-26 9.5M26 -9.5L34 0L26 9.5" stroke="#222224" stroke-width="3.4"/></svg><div class="t" style="top:895.0px;font-size:25.2px;line-height:35px;color:#dcdcdc;font-weight:400;white-space:nowrap;left:2900.8px;">磨皮</div><div style="left:3030.0px;top:910.3px;width:279.0px;height:3.2px;background:#343436;border-radius:2px;"></div><div style="left:3020.8px;top:898.1px;width:18.0px;height:27.8px;background:#f4f4f4;border-radius:6px 6px 9px 9px;"></div><div style="left:3325.7px;top:886.5px;width:139.3px;height:50.8px;background:#333336;border-radius:9px;"></div><div class="t" style="top:895.1px;font-size:25.6px;line-height:36px;color:#f2f2f2;font-weight:400;white-space:nowrap;left:2395.3px;width:2000px;text-align:center;">0%</div><div style="left:3469.8px;top:886.5px;width:37.2px;height:50.8px;background:#303033;border-radius:8px;"></div><svg class="ic" style="left:3476.4px;top:891.9px" width="24" height="40" viewBox="-12 -20 24 40" fill="none" stroke="#dadada" stroke-width="3.6" stroke-linecap="round" stroke-linejoin="round"><path d="M-6.3 -7.2L0 -13.5L6.3 -7.2M-6.3 7.2L0 13.5L6.3 7.2"/></svg><svg class="ic" style="left:3512px;top:893.9px" width="82" height="36" viewBox="-41 -18 82 36" fill="none" stroke-linecap="round" stroke-linejoin="round"><path d="M0 -13.2L13.2 0L0 13.2L-13.2 0Z" stroke="#8c8c8e" stroke-width="2.3"/><path d="M-26 -9.5L-34 0L-26 9.5M26 -9.5L34 0L26 9.5" stroke="#222224" stroke-width="3.4"/></svg><div class="t" style="top:974.1px;font-size:25.2px;line-height:35px;color:#dcdcdc;font-weight:400;white-space:nowrap;left:2900.8px;">瘦脸</div><div style="left:3030.0px;top:989.4px;width:279.0px;height:3.2px;background:#343436;border-radius:2px;"></div><div style="left:3020.8px;top:977.2px;width:18.0px;height:27.8px;background:#f4f4f4;border-radius:6px 6px 9px 9px;"></div><div style="left:3325.7px;top:965.6px;width:139.3px;height:50.8px;background:#333336;border-radius:9px;"></div><div class="t" style="top:974.2px;font-size:25.6px;line-height:36px;color:#f2f2f2;font-weight:400;white-space:nowrap;left:2395.3px;width:2000px;text-align:center;">0%</div><div style="left:3469.8px;top:965.6px;width:37.2px;height:50.8px;background:#303033;border-radius:8px;"></div><svg class="ic" style="left:3476.4px;top:971.0px" width="24" height="40" viewBox="-12 -20 24 40" fill="none" stroke="#dadada" stroke-width="3.6" stroke-linecap="round" stroke-linejoin="round"><path d="M-6.3 -7.2L0 -13.5L6.3 -7.2M-6.3 7.2L0 13.5L6.3 7.2"/></svg><svg class="ic" style="left:3512px;top:973.0px" width="82" height="36" viewBox="-41 -18 82 36" fill="none" stroke-linecap="round" stroke-linejoin="round"><path d="M0 -13.2L13.2 0L0 13.2L-13.2 0Z" stroke="#8c8c8e" stroke-width="2.3"/><path d="M-26 -9.5L-34 0L-26 9.5M26 -9.5L34 0L26 9.5" stroke="#222224" stroke-width="3.4"/></svg><div style="left:2900.7px;top:845.6px;width:688.7px;height:2.0px;background:#2c2c2e;"></div><div style="left:3235.9px;top:1072.7px;width:167.1px;height:46.3px;background:#28282a;border-radius:8px;"></div><div class="t" style="top:1078.0px;font-size:25.5px;line-height:36px;color:#454547;font-weight:500;white-space:nowrap;left:2319.5px;width:2000px;text-align:center;">重置</div><div style="left:3422.2px;top:1072.7px;width:167.2px;height:46.3px;background:#4a4a50;border-radius:8px;"></div><div class="t" style="top:1078.0px;font-size:25.5px;line-height:36px;color:#fff;font-weight:700;white-space:nowrap;left:2505.8px;width:2000px;text-align:center;">应用到全部</div><div style="left:2900.7px;top:1174.4px;width:688.7px;height:1.6px;background:#2c2c2e;"></div><div style="left:2872.0px;top:1190.0px;width:745.8px;height:48.9px;overflow:hidden;border-radius:0 0 16px 16px;"><div class="t" style="top:22.2px;font-size:25.2px;line-height:35px;color:#dcdcdc;font-weight:400;white-space:nowrap;left:30.0px;">层级</div></div><div style="left:301.6px;top:1258.6px;width:3316.2px;height:784.4px;background:#1c1c1d;border-radius:16px;overflow:hidden;"><div style="left:0.0px;top:0.0px;width:3316.2px;height:73.8px;background:#29292d;"></div><div style="left:0.0px;top:73.8px;width:3316.2px;height:1.8px;background:#101011;"></div></div><div style="left:310.9px;top:1268.5px;width:102.1px;height:54.9px;background:#313135;border-radius:9px;"></div><svg class="ic" style="left:300px;top:1260px" width="460" height="72" viewBox="300 1260 460 72" fill="none" stroke="#f0f0f0" stroke-width="3.2" stroke-linejoin="round" stroke-linecap="round">
<path d="M337.6 1282L341.2 1308.6L347.6 1302.4L351.6 1310.2L356.4 1307.8L352.4 1300L359.4 1295.6Z"/>
<path d="M387.2 1292.6L394.6 1299.6L402 1292.6" stroke="#c8c8c8" stroke-width="3.8"/>
<path d="M433 1277.5V1315" stroke="#202023" stroke-width="2"/>
<path d="M469.4 1306.8H482.2A10.4 10.4 0 0 0 482.2 1286H470.4M476.4 1280.2L469.8 1286L476.4 1291.8" stroke-linecap="butt"/>
<path d="M566.6 1306.8H553.8A10.4 10.4 0 0 1 553.8 1286H565.6M559.6 1280.2L566.2 1286L559.6 1291.8" stroke-linecap="butt"/>
<path d="M619.6 1283H625.6V1308.6H619.6M640.6 1283H634.6V1308.6H640.6" stroke-linecap="butt" stroke-linejoin="miter"/>
<path d="M689.6 1286.4H719.6M704.6 1286.4V1279.6M693.6 1286.4V1308.6H715.6V1286.4" stroke-linecap="butt" stroke-linejoin="miter"/>
</svg><div style="left:2954.0px;top:1267.6px;width:55.7px;height:54.8px;background:#19191b;border-radius:9px;"></div><svg class="ic" style="left:2950px;top:1260px" width="660" height="72" viewBox="2950 1260 660 72" fill="none" stroke="#f0f0f0" stroke-width="3" stroke-linecap="butt" stroke-linejoin="miter">
<rect x="2961.9" y="1289.3" width="40.5" height="14" rx="2.5" fill="#16c2d2" stroke="none"/><path d="M2982.1 1290.6V1302" stroke="#19191b" stroke-width="2.6"/>
<path d="M2982.1 1277.4V1283.4M2982.1 1309.2V1315.2M2971.4 1280.6L2974.8 1284.8M2992.8 1280.6L2989.4 1284.8M2971.4 1312L2974.8 1307.8M2992.8 1312L2989.4 1307.8" stroke="#16c2d2" stroke-width="2.6"/>
<path d="M3072.6 1289.6H3059.6Q3056.6 1289.6 3056.6 1292.6V1299Q3056.6 1302 3059.6 1302H3072.6M3077.6 1289.6H3090.6Q3093.6 1289.6 3093.6 1292.6V1299Q3093.6 1302 3090.6 1302H3077.6" stroke-width="3"/><path d="M3064.8 1295.8H3085.4" stroke-width="3"/>
<path d="M3161.6 1289H3149.6V1302.6H3161.6M3174.8 1289H3186.8V1302.6H3174.8" /><path d="M3168.2 1279.6V1311.4"/>
<path d="M3215.9 1277.5V1315" stroke="#202023" stroke-width="2"/>
<circle cx="3263.1" cy="1295.7" r="13.2"/><path d="M3257.6 1295.7H3268.6" stroke-width="2.6"/><path d="M3272.6 1305.2L3276.6 1309.4" stroke-linecap="round"/>
<circle cx="3580.4" cy="1296" r="13.2"/><path d="M3574.9 1296H3585.9M3580.4 1290.5V1301.5" stroke-width="2.6"/><path d="M3589.9 1305.5L3593.9 1309.7" stroke-linecap="round"/>
</svg><div style="left:3308.6px;top:1293.9px;width:227.1px;height:3.6px;background:#2f2f32;border-radius:2px;"></div><div style="left:3308.6px;top:1293.7px;width:123.4px;height:4.0px;background:#e4e4e4;border-radius:2px;"></div><div style="left:3421.8px;top:1281.8px;width:18.2px;height:28.0px;background:#f4f4f4;border-radius:6px 6px 9px 9px;"></div><svg style="left:301.6px;top:1333px" width="3316" height="30" viewBox="301.6 1333 3316 30" fill="none" stroke-width="2.4" stroke-linecap="butt"><path d="M304.86 1335.6V1346.8M318.83 1335.6V1346.8M332.80 1335.6V1358.4M346.76 1335.6V1346.8M360.73 1335.6V1346.8M374.70 1335.6V1346.8M388.66 1335.6V1346.8M402.63 1335.6V1346.8M416.60 1335.6V1346.8M430.57 1335.6V1346.8M444.53 1335.6V1346.8M528.34 1335.6V1346.8M542.30 1335.6V1346.8M556.27 1335.6V1346.8M570.24 1335.6V1346.8M654.04 1335.6V1346.8M668.00 1335.6V1346.8M681.97 1335.6V1346.8M695.94 1335.6V1346.8M779.74 1335.6V1346.8M793.71 1335.6V1346.8M807.67 1335.6V1346.8M821.64 1335.6V1346.8M905.44 1335.6V1346.8M919.41 1335.6V1346.8M933.38 1335.6V1346.8M947.35 1335.6V1346.8M1031.15 1335.6V1346.8M1045.11 1335.6V1346.8M1059.08 1335.6V1346.8M1073.05 1335.6V1346.8M1156.85 1335.6V1346.8M1170.82 1335.6V1346.8M1184.78 1335.6V1346.8M1198.75 1335.6V1346.8M1282.55 1335.6V1346.8M1296.52 1335.6V1346.8M1310.49 1335.6V1346.8M1324.45 1335.6V1346.8M1408.26 1335.6V1346.8M1422.22 1335.6V1346.8M1436.19 1335.6V1346.8M1450.16 1335.6V1346.8M1533.96 1335.6V1346.8M1547.93 1335.6V1346.8M1561.89 1335.6V1346.8M1575.86 1335.6V1346.8M1659.66 1335.6V1346.8M1673.63 1335.6V1346.8M1687.60 1335.6V1346.8M1701.56 1335.6V1346.8M1785.37 1335.6V1346.8M1799.33 1335.6V1346.8M1813.30 1335.6V1346.8M1827.27 1335.6V1346.8M1911.07 1335.6V1346.8M1925.04 1335.6V1346.8M1939.00 1335.6V1346.8M1952.97 1335.6V1346.8M2036.77 1335.6V1346.8M2050.74 1335.6V1346.8M2064.70 1335.6V1346.8M2078.67 1335.6V1346.8M2162.47 1335.6V1346.8M2176.44 1335.6V1346.8M2190.41 1335.6V1346.8M2204.38 1335.6V1346.8M2288.18 1335.6V1346.8M2302.14 1335.6V1346.8M2316.11 1335.6V1346.8M2330.08 1335.6V1346.8M2413.88 1335.6V1346.8M2427.85 1335.6V1346.8M2441.81 1335.6V1346.8M2455.78 1335.6V1346.8M2539.58 1335.6V1346.8M2553.55 1335.6V1346.8M2567.52 1335.6V1346.8M2581.48 1335.6V1346.8M2665.29 1335.6V1346.8M2679.25 1335.6V1346.8M2693.22 1335.6V1346.8M2707.19 1335.6V1346.8M2790.99 1335.6V1346.8M2804.96 1335.6V1346.8M2818.92 1335.6V1346.8M2832.89 1335.6V1346.8M2916.69 1335.6V1346.8M2930.66 1335.6V1346.8M2944.63 1335.6V1346.8M2958.59 1335.6V1346.8M3042.39 1335.6V1346.8M3056.36 1335.6V1346.8M3070.33 1335.6V1346.8M3084.30 1335.6V1346.8M3168.10 1335.6V1346.8M3182.07 1335.6V1346.8M3196.03 1335.6V1346.8M3210.00 1335.6V1346.8M3293.80 1335.6V1346.8M3307.77 1335.6V1346.8M3321.74 1335.6V1346.8M3335.70 1335.6V1346.8M3419.50 1335.6V1346.8M3433.47 1335.6V1346.8M3447.44 1335.6V1346.8M3461.41 1335.6V1346.8M3545.21 1335.6V1346.8M3559.17 1335.6V1346.8M3573.14 1335.6V1346.8M3587.11 1335.6V1346.8" stroke="#38383a"/><path d="M458.50 1335.6V1358.4M584.20 1335.6V1358.4M709.91 1335.6V1358.4M835.61 1335.6V1358.4M961.31 1335.6V1358.4M1087.01 1335.6V1358.4M1212.72 1335.6V1358.4M1338.42 1335.6V1358.4M1464.12 1335.6V1358.4M1589.83 1335.6V1358.4M1715.53 1335.6V1358.4M1841.23 1335.6V1358.4M1966.94 1335.6V1358.4M2092.64 1335.6V1358.4M2218.34 1335.6V1358.4M2344.05 1335.6V1358.4M2469.75 1335.6V1358.4M2595.45 1335.6V1358.4M2721.15 1335.6V1358.4M2846.86 1335.6V1358.4M2972.56 1335.6V1358.4M3098.26 1335.6V1358.4M3223.97 1335.6V1358.4M3349.67 1335.6V1358.4M3475.37 1335.6V1358.4M3601.08 1335.6V1358.4" stroke="#858587"/></svg><div class="t" style="top:1333.9px;font-size:23.6px;line-height:30px;color:#68686a;font-weight:400;white-space:nowrap;letter-spacing:0.5px;left:462.9px;">00:00</div><div class="t" style="top:1333.9px;font-size:23.6px;line-height:30px;color:#68686a;font-weight:400;white-space:nowrap;letter-spacing:0.5px;left:588.6px;">00:10</div><div class="t" style="top:1333.9px;font-size:23.6px;line-height:30px;color:#68686a;font-weight:400;white-space:nowrap;letter-spacing:0.5px;left:714.3px;">00:20</div><div class="t" style="top:1333.9px;font-size:23.6px;line-height:30px;color:#68686a;font-weight:400;white-space:nowrap;letter-spacing:0.5px;left:840.0px;">00:30</div><div class="t" style="top:1333.9px;font-size:23.6px;line-height:30px;color:#68686a;font-weight:400;white-space:nowrap;letter-spacing:0.5px;left:965.7px;">00:40</div><div class="t" style="top:1333.9px;font-size:23.6px;line-height:30px;color:#68686a;font-weight:400;white-space:nowrap;letter-spacing:0.5px;left:1091.4px;">00:50</div><div class="t" style="top:1333.9px;font-size:23.6px;line-height:30px;color:#68686a;font-weight:400;white-space:nowrap;letter-spacing:0.5px;left:1217.1px;">01:00</div><div class="t" style="top:1333.9px;font-size:23.6px;line-height:30px;color:#68686a;font-weight:400;white-space:nowrap;letter-spacing:0.5px;left:1342.8px;">01:10</div><div class="t" style="top:1333.9px;font-size:23.6px;line-height:30px;color:#68686a;font-weight:400;white-space:nowrap;letter-spacing:0.5px;left:1468.5px;">01:20</div><div class="t" style="top:1333.9px;font-size:23.6px;line-height:30px;color:#68686a;font-weight:400;white-space:nowrap;letter-spacing:0.5px;left:1594.2px;">01:30</div><div class="t" style="top:1333.9px;font-size:23.6px;line-height:30px;color:#68686a;font-weight:400;white-space:nowrap;letter-spacing:0.5px;left:1719.9px;">01:40</div><div class="t" style="top:1333.9px;font-size:23.6px;line-height:30px;color:#68686a;font-weight:400;white-space:nowrap;letter-spacing:0.5px;left:1845.6px;">01:50</div><div class="t" style="top:1333.9px;font-size:23.6px;line-height:30px;color:#68686a;font-weight:400;white-space:nowrap;letter-spacing:0.5px;left:1971.3px;">02:00</div><div class="t" style="top:1333.9px;font-size:23.6px;line-height:30px;color:#68686a;font-weight:400;white-space:nowrap;letter-spacing:0.5px;left:2097.0px;">02:10</div><div class="t" style="top:1333.9px;font-size:23.6px;line-height:30px;color:#68686a;font-weight:400;white-space:nowrap;letter-spacing:0.5px;left:2222.7px;">02:20</div><div class="t" style="top:1333.9px;font-size:23.6px;line-height:30px;color:#68686a;font-weight:400;white-space:nowrap;letter-spacing:0.5px;left:2348.4px;">02:30</div><div class="t" style="top:1333.9px;font-size:23.6px;line-height:30px;color:#68686a;font-weight:400;white-space:nowrap;letter-spacing:0.5px;left:2474.1px;">02:40</div><div class="t" style="top:1333.9px;font-size:23.6px;line-height:30px;color:#68686a;font-weight:400;white-space:nowrap;letter-spacing:0.5px;left:2599.8px;">02:50</div><div class="t" style="top:1333.9px;font-size:23.6px;line-height:30px;color:#68686a;font-weight:400;white-space:nowrap;letter-spacing:0.5px;left:2725.5px;">03:00</div><div class="t" style="top:1333.9px;font-size:23.6px;line-height:30px;color:#68686a;font-weight:400;white-space:nowrap;letter-spacing:0.5px;left:2851.2px;">03:10</div><div class="t" style="top:1333.9px;font-size:23.6px;line-height:30px;color:#68686a;font-weight:400;white-space:nowrap;letter-spacing:0.5px;left:2976.9px;">03:20</div><div class="t" style="top:1333.9px;font-size:23.6px;line-height:30px;color:#68686a;font-weight:400;white-space:nowrap;letter-spacing:0.5px;left:3102.6px;">03:30</div><div class="t" style="top:1333.9px;font-size:23.6px;line-height:30px;color:#68686a;font-weight:400;white-space:nowrap;letter-spacing:0.5px;left:3228.3px;">03:40</div><div class="t" style="top:1333.9px;font-size:23.6px;line-height:30px;color:#68686a;font-weight:400;white-space:nowrap;letter-spacing:0.5px;left:3354.0px;">03:50</div><div class="t" style="top:1333.9px;font-size:23.6px;line-height:30px;color:#68686a;font-weight:400;white-space:nowrap;letter-spacing:0.5px;left:3479.7px;">04:00</div><div style="left:2281.4px;top:1438.0px;width:1026.8px;height:41.6px;background:#3055a0;border-radius:7px;"></div><div style="left:2286.2px;top:1443.0px;width:32.0px;height:32.0px;background:rgba(255,255,255,0.2);border-radius:5px;"></div><svg class="ic" style="left:2288.2px;top:1445.0px" width="28" height="28" viewBox="-14 -14 28 28" fill="none" stroke="#fff" stroke-width="2.4" stroke-linecap="round" stroke-linejoin="round"><path d="M-6.8 -9L-1.1 -5.2L4.6 -9.8L5.4 -2.4L9.5 1.4L3 3.8L-0.5 10.3L-4.1 4.1L-10.6 2.7L-5.7 -2.2Z"/><path d="M5.6 7.6L8.6 11"/></svg><div style="left:2323.4px;top:1443.0px;width:56.0px;height:32.0px;background:rgba(255,255,255,0.2);border-radius:5px;"></div><div class="t" style="top:1444.4px;font-size:22.5px;line-height:30px;color:#eaf4f5;font-weight:400;white-space:nowrap;left:1351.4px;width:2000px;text-align:center;">特效</div><div style="left:560.4px;top:1497.8px;width:1641.2px;height:41.9px;background:#4a4192;border-radius:7px;"></div><div style="left:565.1px;top:1502.8px;width:32.0px;height:32.2px;background:rgba(255,255,255,0.2);border-radius:5px;"></div><svg class="ic" style="left:567.1px;top:1504.9px" width="28" height="28" viewBox="-14 -14 28 28" fill="none" stroke="#fff" stroke-width="2.4" stroke-linecap="round" stroke-linejoin="round"><path d="M-3.62 0.01A5.88 5.88 0 1 1 3.62 0.01M-0.17 6.44A5.88 5.88 0 1 1 -3.75 -0.91M3.80 -0.83A5.88 5.88 0 1 1 0.67 2.14"/></svg><div style="left:602.0px;top:1502.8px;width:56.2px;height:32.2px;background:rgba(255,255,255,0.2);border-radius:5px;"></div><div class="t" style="top:1504.3px;font-size:22.5px;line-height:30px;color:#eaf4f5;font-weight:400;white-space:nowrap;left:-369.9px;width:2000px;text-align:center;">调色</div><div style="left:2211.6px;top:1497.8px;width:1338.7px;height:41.9px;background:#4a4192;border-radius:7px;"></div><div style="left:2216.3px;top:1502.8px;width:32.0px;height:32.2px;background:rgba(255,255,255,0.2);border-radius:5px;"></div><svg class="ic" style="left:2218.3px;top:1504.9px" width="28" height="28" viewBox="-14 -14 28 28" fill="none" stroke="#fff" stroke-width="2.4" stroke-linecap="round" stroke-linejoin="round"><path d="M-3.62 0.01A5.88 5.88 0 1 1 3.62 0.01M-0.17 6.44A5.88 5.88 0 1 1 -3.75 -0.91M3.80 -0.83A5.88 5.88 0 1 1 0.67 2.14"/></svg><div style="left:2253.2px;top:1502.8px;width:56.2px;height:32.2px;background:rgba(255,255,255,0.2);border-radius:5px;"></div><div class="t" style="top:1504.3px;font-size:22.5px;line-height:30px;color:#eaf4f5;font-weight:400;white-space:nowrap;left:1281.3px;width:2000px;text-align:center;">调色</div><div style="left:413.4px;top:1586.7px;width:111.6px;height:112.5px;background:#2b2b2c;border-radius:19px;"></div><div style="left:425.5px;top:1597.8px;width:87.9px;height:89.3px;background:#464647;border-radius:14px;"></div><div style="left:450.9px;top:1624.2px;width:37.0px;height:37.0px;background:#d8d8d8;border-radius:50%;"></div><svg class="ic" style="left:455px;top:1630px" width="30" height="26" viewBox="455 1630 30 26"><path d="M459.4 1638.6H463.6L470 1633.6V1651.8L463.6 1646.8H459.4Z" fill="#464647"/><path d="M473.2 1638.4Q475.6 1642.7 473.2 1647M476.8 1635.4Q481 1642.7 476.8 1650" fill="none" stroke="#464647" stroke-width="2.1" stroke-linecap="round"/></svg><div style="left:555.5px;top:1558.7px;width:1658.5px;height:167.5px;background:#02565f;border-radius:5px;overflow:hidden;"></div><svg style="left:564.6px;top:1601.3px" width="1647.4" height="87.4" viewBox="0 0 1647.4 87.4"><svg x="0.0" y="0" width="234.9" height="87.4" viewBox="0 25 280 107" preserveAspectRatio="none"><use href="#desert" width="280" height="150"/></svg><svg x="234.2" y="0" width="234.9" height="87.4" viewBox="0 25 280 107" preserveAspectRatio="none"><use href="#desert" width="280" height="150"/></svg><svg x="468.4" y="0" width="234.9" height="87.4" viewBox="0 25 280 107" preserveAspectRatio="none"><use href="#desert" width="280" height="150"/></svg><svg x="702.6" y="0" width="234.9" height="87.4" viewBox="0 25 280 107" preserveAspectRatio="none"><use href="#desert" width="280" height="150"/></svg><svg x="936.8" y="0" width="234.9" height="87.4" viewBox="0 25 280 107" preserveAspectRatio="none"><use href="#desert" width="280" height="150"/></svg><svg x="1171.0" y="0" width="234.9" height="87.4" viewBox="0 25 280 107" preserveAspectRatio="none"><use href="#desert" width="280" height="150"/></svg><svg x="1405.2" y="0" width="234.9" height="87.4" viewBox="0 25 280 107" preserveAspectRatio="none"><use href="#desert" width="280" height="150"/></svg><svg x="1639.4" y="0" width="234.9" height="87.4" viewBox="0 25 280 107" preserveAspectRatio="none"><use href="#desert" width="280" height="150"/></svg></svg><svg style="left:564.6px;top:1689px" width="1647.4" height="35.4" viewBox="564.6 1689 1647.4 35.4"><path d="M566.1 1724.4v-12.9M569.1 1724.4v-19.2M572.1 1724.4v-24.9M575.1 1724.4v-26.5M578.1 1724.4v-27.6M581.1 1724.4v-26.0M584.1 1724.4v-31.0M587.1 1724.4v-28.7M590.1 1724.4v-25.0M593.1 1724.4v-27.3M596.1 1724.4v-17.8M599.1 1724.4v-21.9M602.1 1724.4v-14.1M605.1 1724.4v-16.5M608.1 1724.4v-13.7M611.1 1724.4v-13.9M614.1 1724.4v-19.3M617.1 1724.4v-19.7M620.1 1724.4v-22.8M623.1 1724.4v-28.1M626.1 1724.4v-22.9M629.1 1724.4v-21.7M632.1 1724.4v-27.1M635.1 1724.4v-28.8M638.1 1724.4v-20.7M641.1 1724.4v-17.9M644.1 1724.4v-21.2M647.1 1724.4v-16.1M650.1 1724.4v-11.8M653.1 1724.4v-10.8M656.1 1724.4v-11.3M659.1 1724.4v-16.5M662.1 1724.4v-16.0M665.1 1724.4v-20.8M668.1 1724.4v-27.8M671.1 1724.4v-31.0M674.1 1724.4v-30.2M677.1 1724.4v-22.9M680.1 1724.4v-23.3M683.1 1724.4v-19.1M686.1 1724.4v-16.0M689.1 1724.4v-17.3M692.1 1724.4v-17.9M695.1 1724.4v-16.0M698.1 1724.4v-16.6M701.1 1724.4v-19.8M704.1 1724.4v-16.1M707.1 1724.4v-16.4M710.1 1724.4v-20.1M713.1 1724.4v-19.7M716.1 1724.4v-20.3M719.1 1724.4v-23.6M722.1 1724.4v-23.1M725.1 1724.4v-19.1M728.1 1724.4v-15.1M731.1 1724.4v-15.9M734.1 1724.4v-13.5M737.1 1724.4v-8.3M740.1 1724.4v-12.0M743.1 1724.4v-16.7M746.1 1724.4v-31.0M749.1 1724.4v-18.5M752.1 1724.4v-20.8M755.1 1724.4v-15.4M758.1 1724.4v-9.9M761.1 1724.4v-18.5M764.1 1724.4v-17.3M767.1 1724.4v-23.1M770.1 1724.4v-24.8M773.1 1724.4v-18.2M776.1 1724.4v-23.9M779.1 1724.4v-16.5M782.1 1724.4v-13.8M785.1 1724.4v-11.4M788.1 1724.4v-17.1M791.1 1724.4v-17.7M794.1 1724.4v-21.2M797.1 1724.4v-23.5M800.1 1724.4v-22.2M803.1 1724.4v-20.5M806.1 1724.4v-15.7M809.1 1724.4v-15.8M812.1 1724.4v-21.5M815.1 1724.4v-21.8M818.1 1724.4v-22.7M821.1 1724.4v-22.4M824.1 1724.4v-18.1M827.1 1724.4v-8.8M830.1 1724.4v-12.2M833.1 1724.4v-15.6M836.1 1724.4v-21.8M839.1 1724.4v-23.5M842.1 1724.4v-27.9M845.1 1724.4v-26.4M848.1 1724.4v-20.0M851.1 1724.4v-20.6M854.1 1724.4v-18.2M857.1 1724.4v-10.4M860.1 1724.4v-21.1M863.1 1724.4v-25.0M866.1 1724.4v-23.3M869.1 1724.4v-23.2M872.1 1724.4v-20.7M875.1 1724.4v-18.2M878.1 1724.4v-10.7M881.1 1724.4v-15.7M884.1 1724.4v-22.4M887.1 1724.4v-26.1M890.1 1724.4v-31.0M893.1 1724.4v-30.5M896.1 1724.4v-31.0M899.1 1724.4v-23.6M902.1 1724.4v-27.6M905.1 1724.4v-26.5M908.1 1724.4v-22.6M911.1 1724.4v-21.2M914.1 1724.4v-15.2M917.1 1724.4v-18.2M920.1 1724.4v-21.0M923.1 1724.4v-23.2M926.1 1724.4v-21.3M929.1 1724.4v-25.7M932.1 1724.4v-22.7M935.1 1724.4v-26.1M938.1 1724.4v-22.7M941.1 1724.4v-15.9M944.1 1724.4v-11.9M947.1 1724.4v-11.7M950.1 1724.4v-9.7M953.1 1724.4v-15.4M956.1 1724.4v-18.0M959.1 1724.4v-17.7M962.1 1724.4v-22.9M965.1 1724.4v-14.6M968.1 1724.4v-17.9M971.1 1724.4v-11.7M974.1 1724.4v-17.6M977.1 1724.4v-27.4M980.1 1724.4v-24.9M983.1 1724.4v-21.8M986.1 1724.4v-22.2M989.1 1724.4v-20.1M992.1 1724.4v-16.7M995.1 1724.4v-11.6M998.1 1724.4v-20.6M1001.1 1724.4v-23.6M1004.1 1724.4v-26.3M1007.1 1724.4v-16.5M1010.1 1724.4v-16.2M1013.1 1724.4v-16.9M1016.1 1724.4v-13.6M1019.1 1724.4v-18.1M1022.1 1724.4v-19.0M1025.1 1724.4v-19.5M1028.1 1724.4v-23.9M1031.1 1724.4v-22.8M1034.1 1724.4v-21.8M1037.1 1724.4v-23.9M1040.1 1724.4v-27.1M1043.1 1724.4v-25.6M1046.1 1724.4v-17.5M1049.1 1724.4v-21.2M1052.1 1724.4v-20.1M1055.1 1724.4v-15.1M1058.1 1724.4v-13.7M1061.1 1724.4v-13.9M1064.1 1724.4v-19.0M1067.1 1724.4v-21.5M1070.1 1724.4v-25.3M1073.1 1724.4v-21.4M1076.1 1724.4v-25.4M1079.1 1724.4v-15.3M1082.1 1724.4v-8.9M1085.1 1724.4v-14.9M1088.1 1724.4v-17.5M1091.1 1724.4v-20.9M1094.1 1724.4v-26.9M1097.1 1724.4v-18.4M1100.1 1724.4v-21.0M1103.1 1724.4v-17.8M1106.1 1724.4v-19.8M1109.1 1724.4v-17.0M1112.1 1724.4v-11.0M1115.1 1724.4v-10.0M1118.1 1724.4v-11.6M1121.1 1724.4v-17.1M1124.1 1724.4v-24.3M1127.1 1724.4v-29.4M1130.1 1724.4v-28.5M1133.1 1724.4v-24.1M1136.1 1724.4v-20.5M1139.1 1724.4v-22.3M1142.1 1724.4v-22.2M1145.1 1724.4v-13.6M1148.1 1724.4v-15.4M1151.1 1724.4v-8.8M1154.1 1724.4v-7.5M1157.1 1724.4v-10.5M1160.1 1724.4v-16.5M1163.1 1724.4v-17.1M1166.1 1724.4v-20.4M1169.1 1724.4v-20.2M1172.1 1724.4v-13.7M1175.1 1724.4v-15.4M1178.1 1724.4v-9.5M1181.1 1724.4v-14.8M1184.1 1724.4v-16.1M1187.1 1724.4v-18.5M1190.1 1724.4v-25.0M1193.1 1724.4v-27.3M1196.1 1724.4v-22.1M1199.1 1724.4v-17.9M1202.1 1724.4v-14.1M1205.1 1724.4v-7.8M1208.1 1724.4v-11.8M1211.1 1724.4v-18.9M1214.1 1724.4v-23.6M1217.1 1724.4v-26.9M1220.1 1724.4v-31.0M1223.1 1724.4v-28.8M1226.1 1724.4v-27.8M1229.1 1724.4v-18.2M1232.1 1724.4v-19.0M1235.1 1724.4v-15.6M1238.1 1724.4v-18.3M1241.1 1724.4v-15.9M1244.1 1724.4v-17.6M1247.1 1724.4v-24.9M1250.1 1724.4v-20.0M1253.1 1724.4v-26.0M1256.1 1724.4v-23.2M1259.1 1724.4v-15.4M1262.1 1724.4v-15.0M1265.1 1724.4v-17.0M1268.1 1724.4v-12.5M1271.1 1724.4v-10.3M1274.1 1724.4v-12.6M1277.1 1724.4v-13.8M1280.1 1724.4v-19.9M1283.1 1724.4v-17.5M1286.1 1724.4v-23.2M1289.1 1724.4v-23.0M1292.1 1724.4v-14.4M1295.1 1724.4v-13.3M1298.1 1724.4v-20.7M1301.1 1724.4v-27.3M1304.1 1724.4v-31.0M1307.1 1724.4v-25.7M1310.1 1724.4v-27.8M1313.1 1724.4v-27.2M1316.1 1724.4v-21.1M1319.1 1724.4v-19.2M1322.1 1724.4v-12.5M1325.1 1724.4v-9.1M1328.1 1724.4v-6.5M1331.1 1724.4v-8.9M1334.1 1724.4v-14.8M1337.1 1724.4v-17.9M1340.1 1724.4v-21.7M1343.1 1724.4v-20.6M1346.1 1724.4v-23.8M1349.1 1724.4v-26.9M1352.1 1724.4v-31.0M1355.1 1724.4v-30.1M1358.1 1724.4v-25.8M1361.1 1724.4v-15.3M1364.1 1724.4v-12.5M1367.1 1724.4v-14.9M1370.1 1724.4v-14.6M1373.1 1724.4v-19.3M1376.1 1724.4v-18.2M1379.1 1724.4v-21.8M1382.1 1724.4v-18.9M1385.1 1724.4v-15.0M1388.1 1724.4v-12.7M1391.1 1724.4v-7.0M1394.1 1724.4v-12.5M1397.1 1724.4v-16.2M1400.1 1724.4v-14.3M1403.1 1724.4v-18.8M1406.1 1724.4v-24.1M1409.1 1724.4v-19.4M1412.1 1724.4v-16.2M1415.1 1724.4v-14.6M1418.1 1724.4v-15.7M1421.1 1724.4v-11.0M1424.1 1724.4v-14.6M1427.1 1724.4v-15.7M1430.1 1724.4v-16.7M1433.1 1724.4v-19.4M1436.1 1724.4v-19.2M1439.1 1724.4v-18.7M1442.1 1724.4v-21.9M1445.1 1724.4v-22.4M1448.1 1724.4v-24.3M1451.1 1724.4v-20.1M1454.1 1724.4v-13.8M1457.1 1724.4v-15.5M1460.1 1724.4v-11.9M1463.1 1724.4v-9.5M1466.1 1724.4v-12.2M1469.1 1724.4v-12.4M1472.1 1724.4v-17.8M1475.1 1724.4v-20.3M1478.1 1724.4v-21.3M1481.1 1724.4v-24.4M1484.1 1724.4v-21.3M1487.1 1724.4v-15.6M1490.1 1724.4v-14.7M1493.1 1724.4v-8.6M1496.1 1724.4v-11.3M1499.1 1724.4v-13.5M1502.1 1724.4v-11.9M1505.1 1724.4v-15.7M1508.1 1724.4v-19.4M1511.1 1724.4v-20.9M1514.1 1724.4v-18.8M1517.1 1724.4v-27.4M1520.1 1724.4v-22.7M1523.1 1724.4v-18.0M1526.1 1724.4v-18.8M1529.1 1724.4v-16.3M1532.1 1724.4v-14.3M1535.1 1724.4v-11.7M1538.1 1724.4v-22.1M1541.1 1724.4v-25.4M1544.1 1724.4v-31.0M1547.1 1724.4v-29.4M1550.1 1724.4v-27.7M1553.1 1724.4v-15.4M1556.1 1724.4v-16.8M1559.1 1724.4v-13.9M1562.1 1724.4v-8.2M1565.1 1724.4v-13.8M1568.1 1724.4v-15.8M1571.1 1724.4v-21.6M1574.1 1724.4v-28.5M1577.1 1724.4v-22.9M1580.1 1724.4v-22.8M1583.1 1724.4v-27.4M1586.1 1724.4v-21.4M1589.1 1724.4v-18.7M1592.1 1724.4v-19.7M1595.1 1724.4v-14.5M1598.1 1724.4v-19.0M1601.1 1724.4v-18.2M1604.1 1724.4v-21.2M1607.1 1724.4v-16.4M1610.1 1724.4v-22.6M1613.1 1724.4v-25.8M1616.1 1724.4v-16.4M1619.1 1724.4v-21.3M1622.1 1724.4v-13.0M1625.1 1724.4v-12.5M1628.1 1724.4v-13.4M1631.1 1724.4v-18.8M1634.1 1724.4v-23.0M1637.1 1724.4v-20.1M1640.1 1724.4v-31.0M1643.1 1724.4v-23.8M1646.1 1724.4v-21.4M1649.1 1724.4v-18.5M1652.1 1724.4v-13.4M1655.1 1724.4v-9.7M1658.1 1724.4v-16.8M1661.1 1724.4v-21.2M1664.1 1724.4v-23.2M1667.1 1724.4v-24.3M1670.1 1724.4v-17.1M1673.1 1724.4v-12.1M1676.1 1724.4v-10.6M1679.1 1724.4v-6.8M1682.1 1724.4v-9.6M1685.1 1724.4v-15.7M1688.1 1724.4v-16.0M1691.1 1724.4v-23.0M1694.1 1724.4v-24.8M1697.1 1724.4v-20.2M1700.1 1724.4v-31.0M1703.1 1724.4v-31.0M1706.1 1724.4v-22.5M1709.1 1724.4v-29.0M1712.1 1724.4v-21.0M1715.1 1724.4v-18.4M1718.1 1724.4v-18.9M1721.1 1724.4v-11.2M1724.1 1724.4v-9.7M1727.1 1724.4v-13.9M1730.1 1724.4v-15.1M1733.1 1724.4v-15.6M1736.1 1724.4v-21.6M1739.1 1724.4v-22.7M1742.1 1724.4v-23.0M1745.1 1724.4v-20.0M1748.1 1724.4v-23.7M1751.1 1724.4v-20.4M1754.1 1724.4v-16.6M1757.1 1724.4v-14.0M1760.1 1724.4v-16.0M1763.1 1724.4v-11.8M1766.1 1724.4v-15.0M1769.1 1724.4v-17.9M1772.1 1724.4v-17.6M1775.1 1724.4v-17.3M1778.1 1724.4v-21.3M1781.1 1724.4v-21.1M1784.1 1724.4v-26.0M1787.1 1724.4v-24.8M1790.1 1724.4v-26.7M1793.1 1724.4v-23.2M1796.1 1724.4v-18.5M1799.1 1724.4v-12.6M1802.1 1724.4v-9.7M1805.1 1724.4v-10.7M1808.1 1724.4v-13.3M1811.1 1724.4v-15.4M1814.1 1724.4v-16.3M1817.1 1724.4v-18.1M1820.1 1724.4v-24.7M1823.1 1724.4v-19.6M1826.1 1724.4v-15.9M1829.1 1724.4v-12.1M1832.1 1724.4v-17.5M1835.1 1724.4v-17.3M1838.1 1724.4v-21.6M1841.1 1724.4v-27.1M1844.1 1724.4v-24.3M1847.1 1724.4v-21.7M1850.1 1724.4v-13.4M1853.1 1724.4v-12.0M1856.1 1724.4v-16.7M1859.1 1724.4v-21.6M1862.1 1724.4v-21.2M1865.1 1724.4v-14.7M1868.1 1724.4v-15.8M1871.1 1724.4v-10.7M1874.1 1724.4v-8.9M1877.1 1724.4v-14.8M1880.1 1724.4v-16.9M1883.1 1724.4v-20.5M1886.1 1724.4v-20.9M1889.1 1724.4v-17.9M1892.1 1724.4v-12.2M1895.1 1724.4v-9.3M1898.1 1724.4v-14.5M1901.1 1724.4v-18.7M1904.1 1724.4v-15.8M1907.1 1724.4v-18.8M1910.1 1724.4v-22.5M1913.1 1724.4v-18.0M1916.1 1724.4v-16.0M1919.1 1724.4v-10.1M1922.1 1724.4v-8.5M1925.1 1724.4v-10.3M1928.1 1724.4v-16.2M1931.1 1724.4v-16.0M1934.1 1724.4v-21.0M1937.1 1724.4v-27.2M1940.1 1724.4v-23.2M1943.1 1724.4v-28.4M1946.1 1724.4v-27.6M1949.1 1724.4v-26.0M1952.1 1724.4v-18.4M1955.1 1724.4v-15.1M1958.1 1724.4v-10.8M1961.1 1724.4v-19.4M1964.1 1724.4v-16.4M1967.1 1724.4v-19.3M1970.1 1724.4v-28.0M1973.1 1724.4v-24.6M1976.1 1724.4v-24.1M1979.1 1724.4v-18.1M1982.1 1724.4v-19.5M1985.1 1724.4v-12.1M1988.1 1724.4v-15.4M1991.1 1724.4v-21.7M1994.1 1724.4v-18.7M1997.1 1724.4v-23.4M2000.1 1724.4v-31.0M2003.1 1724.4v-28.6M2006.1 1724.4v-22.2M2009.1 1724.4v-19.1M2012.1 1724.4v-19.5M2015.1 1724.4v-20.8M2018.1 1724.4v-16.1M2021.1 1724.4v-12.7M2024.1 1724.4v-19.6M2027.1 1724.4v-21.3M2030.1 1724.4v-27.8M2033.1 1724.4v-31.0M2036.1 1724.4v-27.2M2039.1 1724.4v-19.3M2042.1 1724.4v-18.8M2045.1 1724.4v-12.3M2048.1 1724.4v-15.6M2051.1 1724.4v-19.5M2054.1 1724.4v-28.5M2057.1 1724.4v-31.0M2060.1 1724.4v-27.6M2063.1 1724.4v-23.8M2066.1 1724.4v-18.5M2069.1 1724.4v-13.2M2072.1 1724.4v-8.0M2075.1 1724.4v-10.7M2078.1 1724.4v-12.2M2081.1 1724.4v-17.5M2084.1 1724.4v-22.5M2087.1 1724.4v-23.2M2090.1 1724.4v-29.5M2093.1 1724.4v-29.3M2096.1 1724.4v-22.1M2099.1 1724.4v-25.6M2102.1 1724.4v-23.7M2105.1 1724.4v-15.8M2108.1 1724.4v-11.6M2111.1 1724.4v-18.4M2114.1 1724.4v-22.3M2117.1 1724.4v-26.2M2120.1 1724.4v-31.0M2123.1 1724.4v-28.0M2126.1 1724.4v-26.5M2129.1 1724.4v-16.6M2132.1 1724.4v-18.1M2135.1 1724.4v-16.7M2138.1 1724.4v-14.8M2141.1 1724.4v-17.5M2144.1 1724.4v-27.3M2147.1 1724.4v-31.0M2150.1 1724.4v-20.2M2153.1 1724.4v-22.7M2156.1 1724.4v-15.2M2159.1 1724.4v-16.3M2162.1 1724.4v-19.7M2165.1 1724.4v-19.7M2168.1 1724.4v-22.8M2171.1 1724.4v-31.0M2174.1 1724.4v-24.1M2177.1 1724.4v-20.1M2180.1 1724.4v-11.6M2183.1 1724.4v-13.7M2186.1 1724.4v-21.0M2189.1 1724.4v-21.5M2192.1 1724.4v-22.6M2195.1 1724.4v-25.6M2198.1 1724.4v-25.3M2201.1 1724.4v-22.8M2204.1 1724.4v-22.1M2207.1 1724.4v-15.9M2210.1 1724.4v-16.4" stroke="#0b8a90" stroke-width="2.1" fill="none"/></svg><div style="left:567.4px;top:1563.9px;width:32.3px;height:32.0px;background:rgba(255,255,255,0.2);border-radius:5px;"></div><svg class="ic" style="left:569.5px;top:1565.9px" width="28" height="28" viewBox="-14 -14 28 28" fill="none" stroke="#fff" stroke-width="2.4" stroke-linecap="round" stroke-linejoin="round"><path d="M-6.8 -9L-1.1 -5.2L4.6 -9.8L5.4 -2.4L9.5 1.4L3 3.8L-0.5 10.3L-4.1 4.1L-10.6 2.7L-5.7 -2.2Z"/><path d="M5.6 7.6L8.6 11"/></svg><div style="left:604.3px;top:1563.9px;width:55.9px;height:32.0px;background:rgba(255,255,255,0.2);border-radius:5px;"></div><div class="t" style="top:1565.3px;font-size:22.5px;line-height:30px;color:#eaf4f5;font-weight:400;white-space:nowrap;left:-367.8px;width:2000px;text-align:center;">特效</div><div style="left:670.0px;top:1563.9px;width:32.3px;height:32.0px;background:rgba(255,255,255,0.2);border-radius:5px;"></div><svg class="ic" style="left:672.1px;top:1565.9px" width="28" height="28" viewBox="-14 -14 28 28" fill="none" stroke="#fff" stroke-width="2.4" stroke-linecap="round" stroke-linejoin="round"><path d="M-3.62 0.01A5.88 5.88 0 1 1 3.62 0.01M-0.17 6.44A5.88 5.88 0 1 1 -3.75 -0.91M3.80 -0.83A5.88 5.88 0 1 1 0.67 2.14"/></svg><div style="left:706.9px;top:1563.9px;width:55.9px;height:32.0px;background:rgba(255,255,255,0.2);border-radius:5px;"></div><div class="t" style="top:1565.3px;font-size:22.5px;line-height:30px;color:#eaf4f5;font-weight:400;white-space:nowrap;left:-265.2px;width:2000px;text-align:center;">滤镜</div><div style="left:772.6px;top:1563.9px;width:32.3px;height:32.0px;background:rgba(255,255,255,0.2);border-radius:5px;"></div><svg class="ic" style="left:774.8px;top:1565.9px" width="28" height="28" viewBox="-14 -14 28 28" fill="none" stroke="#fff" stroke-width="2.4" stroke-linecap="round" stroke-linejoin="round"><path d="M-10.5 -5.4H-1.4M5 -5.4H10.5M-10.5 5.4H-5M1.4 5.4H10.5"/><circle cx="1.8" cy="-5.4" r="3.2"/><circle cx="-1.8" cy="5.4" r="3.2"/></svg><div style="left:809.5px;top:1563.9px;width:55.9px;height:32.0px;background:rgba(255,255,255,0.2);border-radius:5px;"></div><div class="t" style="top:1565.3px;font-size:22.5px;line-height:30px;color:#eaf4f5;font-weight:400;white-space:nowrap;left:-162.5px;width:2000px;text-align:center;">调节</div><div style="left:874.6px;top:1563.9px;width:181.2px;height:32.0px;background:rgba(255,255,255,0.2);border-radius:5px;"></div><div class="t" style="top:1565.3px;font-size:22.8px;line-height:30px;color:#eaf4f5;font-weight:400;white-space:nowrap;left:-34.8px;width:2000px;text-align:center;">RV0012341.mov</div><div style="left:555.5px;top:1558.7px;width:1658.5px;height:167.5px;border:2.6px solid #fff;border-left-width:7.5px;border-right-width:5px;border-radius:6px;"></div><div style="left:558.1px;top:1632.0px;width:2.2px;height:2.2px;background:#b8b8b8;border-radius:50%;"></div><div style="left:2210.4px;top:1632.0px;width:2.2px;height:2.2px;background:#b8b8b8;border-radius:50%;"></div><div style="left:558.1px;top:1638.0px;width:2.2px;height:2.2px;background:#b8b8b8;border-radius:50%;"></div><div style="left:2210.4px;top:1638.0px;width:2.2px;height:2.2px;background:#b8b8b8;border-radius:50%;"></div><div style="left:558.1px;top:1644.0px;width:2.2px;height:2.2px;background:#b8b8b8;border-radius:50%;"></div><div style="left:2210.4px;top:1644.0px;width:2.2px;height:2.2px;background:#b8b8b8;border-radius:50%;"></div><div style="left:558.1px;top:1650.0px;width:2.2px;height:2.2px;background:#b8b8b8;border-radius:50%;"></div><div style="left:2210.4px;top:1650.0px;width:2.2px;height:2.2px;background:#b8b8b8;border-radius:50%;"></div><div style="left:2214.0px;top:1558.7px;width:523.4px;height:167.5px;background:#035c65;border-radius:5px;overflow:hidden;"></div><svg style="left:2214.6px;top:1601.3px" width="520.8" height="87.4" viewBox="0 0 520.8 87.4"><svg x="0.0" y="0" width="174.3" height="87.4" viewBox="0 10 280 132" preserveAspectRatio="none"><use href="#tunnel" width="280" height="150"/></svg><svg x="173.6" y="0" width="174.3" height="87.4" viewBox="0 10 280 132" preserveAspectRatio="none"><use href="#tunnel" width="280" height="150"/></svg><svg x="347.2" y="0" width="174.3" height="87.4" viewBox="0 10 280 132" preserveAspectRatio="none"><use href="#tunnel" width="280" height="150"/></svg></svg><svg style="left:2214.6px;top:1689px" width="520.8" height="35.4" viewBox="2214.6 1689 520.8 35.4"><path d="M2216.1 1724.4v-14.9M2219.1 1724.4v-17.4M2222.1 1724.4v-21.5M2225.1 1724.4v-25.9M2228.1 1724.4v-21.9M2231.1 1724.4v-26.4M2234.1 1724.4v-29.9M2237.1 1724.4v-18.8M2240.1 1724.4v-17.1M2243.1 1724.4v-20.9M2246.1 1724.4v-13.8M2249.1 1724.4v-13.2M2252.1 1724.4v-13.7M2255.1 1724.4v-12.2M2258.1 1724.4v-7.8M2261.1 1724.4v-9.6M2264.1 1724.4v-13.2M2267.1 1724.4v-17.0M2270.1 1724.4v-20.4M2273.1 1724.4v-24.3M2276.1 1724.4v-28.8M2279.1 1724.4v-24.1M2282.1 1724.4v-20.4M2285.1 1724.4v-18.1M2288.1 1724.4v-16.9M2291.1 1724.4v-16.3M2294.1 1724.4v-14.7M2297.1 1724.4v-14.4M2300.1 1724.4v-24.1M2303.1 1724.4v-23.0M2306.1 1724.4v-27.5M2309.1 1724.4v-21.1M2312.1 1724.4v-24.8M2315.1 1724.4v-17.4M2318.1 1724.4v-18.4M2321.1 1724.4v-18.2M2324.1 1724.4v-15.2M2327.1 1724.4v-16.9M2330.1 1724.4v-14.6M2333.1 1724.4v-21.5M2336.1 1724.4v-21.1M2339.1 1724.4v-20.5M2342.1 1724.4v-20.9M2345.1 1724.4v-21.9M2348.1 1724.4v-21.9M2351.1 1724.4v-16.6M2354.1 1724.4v-21.1M2357.1 1724.4v-18.6M2360.1 1724.4v-15.1M2363.1 1724.4v-11.0M2366.1 1724.4v-8.6M2369.1 1724.4v-16.4M2372.1 1724.4v-18.7M2375.1 1724.4v-22.8M2378.1 1724.4v-25.3M2381.1 1724.4v-22.9M2384.1 1724.4v-14.8M2387.1 1724.4v-10.3M2390.1 1724.4v-12.8M2393.1 1724.4v-17.7M2396.1 1724.4v-16.4M2399.1 1724.4v-22.5M2402.1 1724.4v-31.0M2405.1 1724.4v-27.6M2408.1 1724.4v-23.4M2411.1 1724.4v-24.8M2414.1 1724.4v-22.0M2417.1 1724.4v-18.1M2420.1 1724.4v-12.6M2423.1 1724.4v-10.9M2426.1 1724.4v-14.3M2429.1 1724.4v-22.7M2432.1 1724.4v-23.5M2435.1 1724.4v-25.4M2438.1 1724.4v-21.6M2441.1 1724.4v-19.2M2444.1 1724.4v-11.4M2447.1 1724.4v-16.0M2450.1 1724.4v-18.5M2453.1 1724.4v-21.8M2456.1 1724.4v-17.5M2459.1 1724.4v-16.8M2462.1 1724.4v-21.7M2465.1 1724.4v-19.5M2468.1 1724.4v-21.8M2471.1 1724.4v-18.8M2474.1 1724.4v-21.2M2477.1 1724.4v-23.7M2480.1 1724.4v-19.7M2483.1 1724.4v-16.6M2486.1 1724.4v-14.0M2489.1 1724.4v-16.7M2492.1 1724.4v-14.1M2495.1 1724.4v-14.2M2498.1 1724.4v-15.2M2501.1 1724.4v-16.5M2504.1 1724.4v-20.7M2507.1 1724.4v-19.7M2510.1 1724.4v-25.3M2513.1 1724.4v-22.4M2516.1 1724.4v-20.1M2519.1 1724.4v-14.6M2522.1 1724.4v-13.9M2525.1 1724.4v-15.8M2528.1 1724.4v-13.5M2531.1 1724.4v-11.0M2534.1 1724.4v-13.9M2537.1 1724.4v-13.6M2540.1 1724.4v-18.6M2543.1 1724.4v-21.7M2546.1 1724.4v-23.1M2549.1 1724.4v-20.0M2552.1 1724.4v-21.8M2555.1 1724.4v-17.9M2558.1 1724.4v-19.1M2561.1 1724.4v-20.8M2564.1 1724.4v-19.7M2567.1 1724.4v-15.2M2570.1 1724.4v-13.1M2573.1 1724.4v-15.0M2576.1 1724.4v-13.3M2579.1 1724.4v-19.2M2582.1 1724.4v-23.0M2585.1 1724.4v-20.8M2588.1 1724.4v-21.9M2591.1 1724.4v-17.6M2594.1 1724.4v-11.8M2597.1 1724.4v-12.2M2600.1 1724.4v-14.0M2603.1 1724.4v-19.8M2606.1 1724.4v-16.1M2609.1 1724.4v-19.4M2612.1 1724.4v-29.8M2615.1 1724.4v-25.7M2618.1 1724.4v-29.2M2621.1 1724.4v-25.2M2624.1 1724.4v-19.3M2627.1 1724.4v-19.2M2630.1 1724.4v-14.4M2633.1 1724.4v-17.6M2636.1 1724.4v-12.0M2639.1 1724.4v-14.7M2642.1 1724.4v-15.7M2645.1 1724.4v-18.3M2648.1 1724.4v-22.0M2651.1 1724.4v-21.6M2654.1 1724.4v-26.7M2657.1 1724.4v-20.5M2660.1 1724.4v-30.6M2663.1 1724.4v-23.8M2666.1 1724.4v-24.2M2669.1 1724.4v-22.2M2672.1 1724.4v-17.2M2675.1 1724.4v-14.1M2678.1 1724.4v-9.6M2681.1 1724.4v-13.0M2684.1 1724.4v-20.0M2687.1 1724.4v-21.3M2690.1 1724.4v-30.1M2693.1 1724.4v-24.2M2696.1 1724.4v-28.7M2699.1 1724.4v-24.0M2702.1 1724.4v-16.2M2705.1 1724.4v-14.5M2708.1 1724.4v-18.4M2711.1 1724.4v-22.8M2714.1 1724.4v-18.3M2717.1 1724.4v-23.3M2720.1 1724.4v-24.2M2723.1 1724.4v-20.8M2726.1 1724.4v-18.5M2729.1 1724.4v-17.3M2732.1 1724.4v-12.2" stroke="#0b8a90" stroke-width="2.1" fill="none"/></svg><div style="left:2212.0px;top:1563.9px;width:32.3px;height:32.0px;background:rgba(255,255,255,0.2);border-radius:5px;"></div><svg class="ic" style="left:2214.2px;top:1565.9px" width="28" height="28" viewBox="-14 -14 28 28" fill="none" stroke="#fff" stroke-width="2.4" stroke-linecap="round" stroke-linejoin="round"><path d="M-6.8 -9L-1.1 -5.2L4.6 -9.8L5.4 -2.4L9.5 1.4L3 3.8L-0.5 10.3L-4.1 4.1L-10.6 2.7L-5.7 -2.2Z"/><path d="M5.6 7.6L8.6 11"/></svg><div style="left:2248.9px;top:1563.9px;width:55.9px;height:32.0px;background:rgba(255,255,255,0.2);border-radius:5px;"></div><div class="t" style="top:1565.3px;font-size:22.5px;line-height:30px;color:#eaf4f5;font-weight:400;white-space:nowrap;left:1276.9px;width:2000px;text-align:center;">特效</div><div style="left:2314.6px;top:1563.9px;width:32.3px;height:32.0px;background:rgba(255,255,255,0.2);border-radius:5px;"></div><svg class="ic" style="left:2316.8px;top:1565.9px" width="28" height="28" viewBox="-14 -14 28 28" fill="none" stroke="#fff" stroke-width="2.4" stroke-linecap="round" stroke-linejoin="round"><path d="M-3.62 0.01A5.88 5.88 0 1 1 3.62 0.01M-0.17 6.44A5.88 5.88 0 1 1 -3.75 -0.91M3.80 -0.83A5.88 5.88 0 1 1 0.67 2.14"/></svg><div style="left:2351.5px;top:1563.9px;width:55.9px;height:32.0px;background:rgba(255,255,255,0.2);border-radius:5px;"></div><div class="t" style="top:1565.3px;font-size:22.5px;line-height:30px;color:#eaf4f5;font-weight:400;white-space:nowrap;left:1379.4px;width:2000px;text-align:center;">滤镜</div><div style="left:2417.2px;top:1563.9px;width:32.3px;height:32.0px;background:rgba(255,255,255,0.2);border-radius:5px;"></div><svg class="ic" style="left:2419.3px;top:1565.9px" width="28" height="28" viewBox="-14 -14 28 28" fill="none" stroke="#fff" stroke-width="2.4" stroke-linecap="round" stroke-linejoin="round"><path d="M-10.5 -5.4H-1.4M5 -5.4H10.5M-10.5 5.4H-5M1.4 5.4H10.5"/><circle cx="1.8" cy="-5.4" r="3.2"/><circle cx="-1.8" cy="5.4" r="3.2"/></svg><div style="left:2454.1px;top:1563.9px;width:55.9px;height:32.0px;background:rgba(255,255,255,0.2);border-radius:5px;"></div><div class="t" style="top:1565.3px;font-size:22.5px;line-height:30px;color:#eaf4f5;font-weight:400;white-space:nowrap;left:1482.1px;width:2000px;text-align:center;">调节</div><div style="left:2519.2px;top:1563.9px;width:185.5px;height:32.0px;background:rgba(255,255,255,0.2);border-radius:5px;"></div><div class="t" style="top:1565.3px;font-size:23px;line-height:30px;color:#eaf4f5;font-weight:400;white-space:nowrap;left:1611.9px;width:2000px;text-align:center;">RV0012349.mov</div><div style="left:2739.0px;top:1558.7px;width:813.4px;height:167.5px;background:#035c65;border-radius:5px;overflow:hidden;"></div><svg style="left:2740.3px;top:1601.3px" width="810.1" height="87.4" viewBox="0 0 810.1 87.4"><svg x="0.0" y="0" width="162.6" height="87.4" viewBox="0 8 280 134" preserveAspectRatio="none"><use href="#garage" width="280" height="150"/></svg><svg x="161.9" y="0" width="162.6" height="87.4" viewBox="0 8 280 134" preserveAspectRatio="none"><use href="#garage" width="280" height="150"/></svg><svg x="323.8" y="0" width="162.6" height="87.4" viewBox="0 8 280 134" preserveAspectRatio="none"><use href="#garage" width="280" height="150"/></svg><svg x="485.7" y="0" width="162.6" height="87.4" viewBox="0 8 280 134" preserveAspectRatio="none"><use href="#garage" width="280" height="150"/></svg><svg x="647.6" y="0" width="162.6" height="87.4" viewBox="0 8 280 134" preserveAspectRatio="none"><use href="#garage" width="280" height="150"/></svg></svg><div style="left:2740.3px;top:1601.3px;width:810.1px;height:87.4px;background:rgba(10,18,24,0.42);"></div><svg style="left:2740.3px;top:1689px" width="810.1" height="35.4" viewBox="2740.3 1689 810.1 35.4"><path d="M2741.8 1724.4v-18.5M2744.8 1724.4v-27.1M2747.8 1724.4v-31.0M2750.8 1724.4v-26.9M2753.8 1724.4v-23.1M2756.8 1724.4v-17.0M2759.8 1724.4v-16.4M2762.8 1724.4v-14.8M2765.8 1724.4v-15.2M2768.8 1724.4v-16.7M2771.8 1724.4v-21.3M2774.8 1724.4v-27.3M2777.8 1724.4v-21.3M2780.8 1724.4v-22.2M2783.8 1724.4v-13.8M2786.8 1724.4v-14.3M2789.8 1724.4v-11.6M2792.8 1724.4v-12.2M2795.8 1724.4v-13.7M2798.8 1724.4v-17.4M2801.8 1724.4v-14.9M2804.8 1724.4v-16.2M2807.8 1724.4v-23.0M2810.8 1724.4v-20.8M2813.8 1724.4v-21.2M2816.8 1724.4v-14.2M2819.8 1724.4v-11.8M2822.8 1724.4v-11.0M2825.8 1724.4v-10.0M2828.8 1724.4v-17.3M2831.8 1724.4v-29.9M2834.8 1724.4v-24.4M2837.8 1724.4v-27.2M2840.8 1724.4v-21.8M2843.8 1724.4v-17.0M2846.8 1724.4v-15.1M2849.8 1724.4v-17.4M2852.8 1724.4v-20.0M2855.8 1724.4v-25.2M2858.8 1724.4v-23.8M2861.8 1724.4v-21.7M2864.8 1724.4v-29.5M2867.8 1724.4v-24.1M2870.8 1724.4v-18.6M2873.8 1724.4v-17.7M2876.8 1724.4v-19.2M2879.8 1724.4v-12.9M2882.8 1724.4v-12.5M2885.8 1724.4v-17.6M2888.8 1724.4v-23.1M2891.8 1724.4v-17.9M2894.8 1724.4v-18.5M2897.8 1724.4v-23.6M2900.8 1724.4v-18.6M2903.8 1724.4v-17.2M2906.8 1724.4v-16.5M2909.8 1724.4v-11.5M2912.8 1724.4v-8.9M2915.8 1724.4v-10.0M2918.8 1724.4v-14.8M2921.8 1724.4v-18.1M2924.8 1724.4v-20.8M2927.8 1724.4v-22.0M2930.8 1724.4v-23.7M2933.8 1724.4v-25.4M2936.8 1724.4v-31.0M2939.8 1724.4v-18.8M2942.8 1724.4v-18.2M2945.8 1724.4v-22.3M2948.8 1724.4v-18.6M2951.8 1724.4v-17.2M2954.8 1724.4v-19.4M2957.8 1724.4v-21.7M2960.8 1724.4v-21.9M2963.8 1724.4v-18.2M2966.8 1724.4v-28.6M2969.8 1724.4v-21.0M2972.8 1724.4v-24.9M2975.8 1724.4v-27.8M2978.8 1724.4v-16.7M2981.8 1724.4v-15.4M2984.8 1724.4v-15.9M2987.8 1724.4v-9.2M2990.8 1724.4v-15.1M2993.8 1724.4v-18.2M2996.8 1724.4v-16.7M2999.8 1724.4v-21.2M3002.8 1724.4v-20.2M3005.8 1724.4v-28.7M3008.8 1724.4v-20.0M3011.8 1724.4v-22.8M3014.8 1724.4v-22.1M3017.8 1724.4v-17.0M3020.8 1724.4v-11.4M3023.8 1724.4v-14.1M3026.8 1724.4v-14.8M3029.8 1724.4v-20.7M3032.8 1724.4v-20.6M3035.8 1724.4v-24.4M3038.8 1724.4v-27.0M3041.8 1724.4v-16.7M3044.8 1724.4v-13.0M3047.8 1724.4v-13.5M3050.8 1724.4v-14.5M3053.8 1724.4v-15.5M3056.8 1724.4v-20.1M3059.8 1724.4v-25.8M3062.8 1724.4v-18.2M3065.8 1724.4v-22.2M3068.8 1724.4v-16.4M3071.8 1724.4v-13.3M3074.8 1724.4v-10.8M3077.8 1724.4v-9.8M3080.8 1724.4v-12.8M3083.8 1724.4v-18.0M3086.8 1724.4v-20.9M3089.8 1724.4v-23.9M3092.8 1724.4v-19.1M3095.8 1724.4v-16.9M3098.8 1724.4v-15.9M3101.8 1724.4v-15.1M3104.8 1724.4v-12.5M3107.8 1724.4v-8.8M3110.8 1724.4v-11.1M3113.8 1724.4v-18.9M3116.8 1724.4v-22.1M3119.8 1724.4v-25.6M3122.8 1724.4v-22.9M3125.8 1724.4v-23.0M3128.8 1724.4v-31.0M3131.8 1724.4v-30.6M3134.8 1724.4v-23.1M3137.8 1724.4v-17.9M3140.8 1724.4v-18.8M3143.8 1724.4v-18.2M3146.8 1724.4v-12.0M3149.8 1724.4v-16.4M3152.8 1724.4v-18.7M3155.8 1724.4v-22.4M3158.8 1724.4v-17.5M3161.8 1724.4v-28.9M3164.8 1724.4v-26.7M3167.8 1724.4v-23.9M3170.8 1724.4v-17.4M3173.8 1724.4v-13.9M3176.8 1724.4v-12.3M3179.8 1724.4v-12.9M3182.8 1724.4v-20.0M3185.8 1724.4v-18.7M3188.8 1724.4v-21.3M3191.8 1724.4v-16.5M3194.8 1724.4v-23.7M3197.8 1724.4v-27.1M3200.8 1724.4v-22.3M3203.8 1724.4v-14.4M3206.8 1724.4v-16.0M3209.8 1724.4v-15.1M3212.8 1724.4v-12.0M3215.8 1724.4v-12.3M3218.8 1724.4v-16.7M3221.8 1724.4v-19.4M3224.8 1724.4v-22.7M3227.8 1724.4v-22.2M3230.8 1724.4v-28.1M3233.8 1724.4v-20.9M3236.8 1724.4v-17.6M3239.8 1724.4v-17.1M3242.8 1724.4v-17.8M3245.8 1724.4v-17.9M3248.8 1724.4v-16.8M3251.8 1724.4v-17.4M3254.8 1724.4v-15.7M3257.8 1724.4v-16.3M3260.8 1724.4v-18.0M3263.8 1724.4v-19.3M3266.8 1724.4v-25.6M3269.8 1724.4v-20.3M3272.8 1724.4v-21.3M3275.8 1724.4v-15.2M3278.8 1724.4v-16.6M3281.8 1724.4v-13.4M3284.8 1724.4v-13.8M3287.8 1724.4v-14.8M3290.8 1724.4v-14.8M3293.8 1724.4v-18.2M3296.8 1724.4v-18.8M3299.8 1724.4v-21.0M3302.8 1724.4v-17.4M3305.8 1724.4v-20.9M3308.8 1724.4v-14.3M3311.8 1724.4v-12.9M3314.8 1724.4v-10.7M3317.8 1724.4v-11.2M3320.8 1724.4v-11.0M3323.8 1724.4v-16.7M3326.8 1724.4v-13.7M3329.8 1724.4v-19.1M3332.8 1724.4v-20.1M3335.8 1724.4v-24.4M3338.8 1724.4v-22.7M3341.8 1724.4v-23.3M3344.8 1724.4v-19.1M3347.8 1724.4v-14.1M3350.8 1724.4v-18.4M3353.8 1724.4v-14.5M3356.8 1724.4v-14.6M3359.8 1724.4v-16.9M3362.8 1724.4v-16.4M3365.8 1724.4v-18.6M3368.8 1724.4v-21.4M3371.8 1724.4v-25.7M3374.8 1724.4v-29.7M3377.8 1724.4v-31.0M3380.8 1724.4v-23.3M3383.8 1724.4v-27.1M3386.8 1724.4v-15.8M3389.8 1724.4v-18.8M3392.8 1724.4v-13.7M3395.8 1724.4v-11.5M3398.8 1724.4v-10.3M3401.8 1724.4v-9.7M3404.8 1724.4v-13.7M3407.8 1724.4v-14.5M3410.8 1724.4v-22.2M3413.8 1724.4v-30.6M3416.8 1724.4v-31.0M3419.8 1724.4v-24.0M3422.8 1724.4v-18.3M3425.8 1724.4v-14.5M3428.8 1724.4v-7.4M3431.8 1724.4v-16.2M3434.8 1724.4v-24.7M3437.8 1724.4v-30.1M3440.8 1724.4v-25.0M3443.8 1724.4v-23.7M3446.8 1724.4v-16.4M3449.8 1724.4v-13.0M3452.8 1724.4v-12.8M3455.8 1724.4v-18.8M3458.8 1724.4v-14.5M3461.8 1724.4v-16.1M3464.8 1724.4v-16.3M3467.8 1724.4v-21.2M3470.8 1724.4v-28.4M3473.8 1724.4v-17.7M3476.8 1724.4v-19.8M3479.8 1724.4v-14.3M3482.8 1724.4v-9.8M3485.8 1724.4v-9.2M3488.8 1724.4v-11.6M3491.8 1724.4v-11.4M3494.8 1724.4v-14.9M3497.8 1724.4v-14.6M3500.8 1724.4v-23.4M3503.8 1724.4v-25.5M3506.8 1724.4v-23.6M3509.8 1724.4v-16.2M3512.8 1724.4v-20.5M3515.8 1724.4v-15.4M3518.8 1724.4v-14.0M3521.8 1724.4v-12.5M3524.8 1724.4v-14.1M3527.8 1724.4v-12.0M3530.8 1724.4v-9.2M3533.8 1724.4v-10.9M3536.8 1724.4v-16.3M3539.8 1724.4v-15.1M3542.8 1724.4v-22.9M3545.8 1724.4v-18.4M3548.8 1724.4v-20.1" stroke="#0b8a90" stroke-width="2.1" fill="none"/></svg><div style="left:2742.1px;top:1563.9px;width:181.2px;height:32.0px;background:rgba(255,255,255,0.2);border-radius:5px;"></div><div class="t" style="top:1565.3px;font-size:22.8px;line-height:30px;color:#eaf4f5;font-weight:400;white-space:nowrap;left:1832.7px;width:2000px;text-align:center;">RV0012341.mov</div><div style="left:770.0px;top:1745.8px;width:2352.0px;height:106.6px;background:#05445a;border-radius:7px;overflow:hidden;"></div><svg style="left:770.5px;top:1780px" width="2351.5" height="72.4" viewBox="770.5 1780 2351.5 72.4"><path d="M772.6 1852.4v-31.9M776.9 1852.4v-42.8M781.2 1852.4v-38.5M785.5 1852.4v-52.8M789.8 1852.4v-55.7M794.2 1852.4v-51.4M798.5 1852.4v-36.4M802.8 1852.4v-45.6M807.1 1852.4v-42.4M811.4 1852.4v-28.1M815.8 1852.4v-23.0M820.1 1852.4v-24.3M824.4 1852.4v-12.4M828.7 1852.4v-16.7M833.0 1852.4v-21.1M837.4 1852.4v-35.9M841.7 1852.4v-41.4M846.0 1852.4v-41.7M850.3 1852.4v-50.8M854.6 1852.4v-42.4M859.0 1852.4v-63.1M863.3 1852.4v-50.7M867.6 1852.4v-45.1M871.9 1852.4v-35.6M876.2 1852.4v-28.9M880.6 1852.4v-20.1M884.9 1852.4v-12.5M889.2 1852.4v-19.3M893.5 1852.4v-21.4M897.8 1852.4v-30.9M902.2 1852.4v-37.2M906.5 1852.4v-40.5M910.8 1852.4v-40.4M915.1 1852.4v-40.2M919.4 1852.4v-38.4M923.8 1852.4v-35.2M928.1 1852.4v-32.1M932.4 1852.4v-30.5M936.7 1852.4v-16.6M941.0 1852.4v-15.1M945.4 1852.4v-10.2M949.7 1852.4v-5.7M954.0 1852.4v-14.6M958.3 1852.4v-22.1M962.6 1852.4v-28.4M967.0 1852.4v-38.0M971.3 1852.4v-44.4M975.6 1852.4v-45.0M979.9 1852.4v-39.6M984.2 1852.4v-36.6M988.6 1852.4v-27.9M992.9 1852.4v-34.2M997.2 1852.4v-25.0M1001.5 1852.4v-25.1M1005.8 1852.4v-24.4M1010.2 1852.4v-32.8M1014.5 1852.4v-40.2M1018.8 1852.4v-30.5M1023.1 1852.4v-41.1M1027.4 1852.4v-46.5M1031.8 1852.4v-53.8M1036.1 1852.4v-38.8M1040.4 1852.4v-36.1M1044.7 1852.4v-20.1M1049.0 1852.4v-12.8M1053.4 1852.4v-24.9M1057.7 1852.4v-30.5M1062.0 1852.4v-33.8M1066.3 1852.4v-34.0M1070.6 1852.4v-57.5M1075.0 1852.4v-59.6M1079.3 1852.4v-41.5M1083.6 1852.4v-37.8M1087.9 1852.4v-35.8M1092.2 1852.4v-28.9M1096.6 1852.4v-17.7M1100.9 1852.4v-15.3M1105.2 1852.4v-5.4M1109.5 1852.4v-11.0M1113.8 1852.4v-21.8M1118.2 1852.4v-21.6M1122.5 1852.4v-34.6M1126.8 1852.4v-33.5M1131.1 1852.4v-47.2M1135.4 1852.4v-46.7M1139.8 1852.4v-43.8M1144.1 1852.4v-48.6M1148.4 1852.4v-34.7M1152.7 1852.4v-28.8M1157.0 1852.4v-25.3M1161.4 1852.4v-16.8M1165.7 1852.4v-11.2M1170.0 1852.4v-7.1M1174.3 1852.4v-22.9M1178.6 1852.4v-37.5M1183.0 1852.4v-47.1M1187.3 1852.4v-27.7M1191.6 1852.4v-34.7M1195.9 1852.4v-31.2M1200.2 1852.4v-23.8M1204.6 1852.4v-24.8M1208.9 1852.4v-41.1M1213.2 1852.4v-40.4M1217.5 1852.4v-44.1M1221.8 1852.4v-36.5M1226.2 1852.4v-22.1M1230.5 1852.4v-12.9M1234.8 1852.4v-23.9M1239.1 1852.4v-25.0M1243.4 1852.4v-34.3M1247.8 1852.4v-43.6M1252.1 1852.4v-60.4M1256.4 1852.4v-43.5M1260.7 1852.4v-34.3M1265.0 1852.4v-40.1M1269.4 1852.4v-34.5M1273.7 1852.4v-25.2M1278.0 1852.4v-15.7M1282.3 1852.4v-12.3M1286.6 1852.4v-8.6M1291.0 1852.4v-18.0M1295.3 1852.4v-23.0M1299.6 1852.4v-39.5M1303.9 1852.4v-50.0M1308.2 1852.4v-61.9M1312.6 1852.4v-64.0M1316.9 1852.4v-42.8M1321.2 1852.4v-49.8M1325.5 1852.4v-34.0M1329.8 1852.4v-41.5M1334.2 1852.4v-32.1M1338.5 1852.4v-25.2M1342.8 1852.4v-14.0M1347.1 1852.4v-8.0M1351.4 1852.4v-20.1M1355.8 1852.4v-26.5M1360.1 1852.4v-34.7M1364.4 1852.4v-40.2M1368.7 1852.4v-54.8M1373.0 1852.4v-52.1M1377.4 1852.4v-42.6M1381.7 1852.4v-36.3M1386.0 1852.4v-27.5M1390.3 1852.4v-22.8M1394.6 1852.4v-31.4M1399.0 1852.4v-26.1M1403.3 1852.4v-30.3M1407.6 1852.4v-42.9M1411.9 1852.4v-38.5M1416.2 1852.4v-24.8M1420.6 1852.4v-19.6M1424.9 1852.4v-12.0M1429.2 1852.4v-16.2M1433.5 1852.4v-25.9M1437.8 1852.4v-33.9M1442.2 1852.4v-39.4M1446.5 1852.4v-36.1M1450.8 1852.4v-39.6M1455.1 1852.4v-45.2M1459.4 1852.4v-28.5M1463.8 1852.4v-17.4M1468.1 1852.4v-8.8M1472.4 1852.4v-15.0M1476.7 1852.4v-19.4M1481.0 1852.4v-20.1M1485.4 1852.4v-34.6M1489.7 1852.4v-31.2M1494.0 1852.4v-32.9M1498.3 1852.4v-43.7M1502.6 1852.4v-43.7M1507.0 1852.4v-41.6M1511.3 1852.4v-30.6M1515.6 1852.4v-35.0M1519.9 1852.4v-28.3M1524.2 1852.4v-21.0M1528.6 1852.4v-32.9M1532.9 1852.4v-36.6M1537.2 1852.4v-42.5M1541.5 1852.4v-43.0M1545.8 1852.4v-38.2M1550.2 1852.4v-53.2M1554.5 1852.4v-50.4M1558.8 1852.4v-38.7M1563.1 1852.4v-39.6M1567.4 1852.4v-34.9M1571.8 1852.4v-23.1M1576.1 1852.4v-23.5M1580.4 1852.4v-17.9M1584.7 1852.4v-29.7M1589.0 1852.4v-29.4M1593.4 1852.4v-45.6M1597.7 1852.4v-63.0M1602.0 1852.4v-44.8M1606.3 1852.4v-28.4M1610.6 1852.4v-8.9M1615.0 1852.4v-10.5M1619.3 1852.4v-19.3M1623.6 1852.4v-20.5M1627.9 1852.4v-28.1M1632.2 1852.4v-24.4M1636.6 1852.4v-38.9M1640.9 1852.4v-36.7M1645.2 1852.4v-44.6M1649.5 1852.4v-37.8M1653.8 1852.4v-33.5M1658.2 1852.4v-21.8M1662.5 1852.4v-14.4M1666.8 1852.4v-11.6M1671.1 1852.4v-5.6M1675.4 1852.4v-11.6M1679.8 1852.4v-18.4M1684.1 1852.4v-19.7M1688.4 1852.4v-21.6M1692.7 1852.4v-24.3M1697.0 1852.4v-34.2M1701.4 1852.4v-41.7M1705.7 1852.4v-35.7M1710.0 1852.4v-44.1M1714.3 1852.4v-32.5M1718.6 1852.4v-27.5M1723.0 1852.4v-34.9M1727.3 1852.4v-25.7M1731.6 1852.4v-25.3M1735.9 1852.4v-17.7M1740.2 1852.4v-20.2M1744.6 1852.4v-27.3M1748.9 1852.4v-36.2M1753.2 1852.4v-46.8M1757.5 1852.4v-39.4M1761.8 1852.4v-29.3M1766.2 1852.4v-18.6M1770.5 1852.4v-7.7M1774.8 1852.4v-14.7M1779.1 1852.4v-20.6M1783.4 1852.4v-28.2M1787.8 1852.4v-31.3M1792.1 1852.4v-42.2M1796.4 1852.4v-47.2M1800.7 1852.4v-34.2M1805.0 1852.4v-43.2M1809.4 1852.4v-34.0M1813.7 1852.4v-31.3M1818.0 1852.4v-24.8M1822.3 1852.4v-19.1M1826.6 1852.4v-28.7M1831.0 1852.4v-28.2M1835.3 1852.4v-34.3M1839.6 1852.4v-33.0M1843.9 1852.4v-38.9M1848.2 1852.4v-31.4M1852.6 1852.4v-25.1M1856.9 1852.4v-22.4M1861.2 1852.4v-10.8M1865.5 1852.4v-5.7M1869.8 1852.4v-13.8M1874.2 1852.4v-21.1M1878.5 1852.4v-24.4M1882.8 1852.4v-24.7M1887.1 1852.4v-34.6M1891.4 1852.4v-48.9M1895.8 1852.4v-48.8M1900.1 1852.4v-43.1M1904.4 1852.4v-37.0M1908.7 1852.4v-35.9M1913.0 1852.4v-30.3M1917.4 1852.4v-26.1M1921.7 1852.4v-22.2M1926.0 1852.4v-28.0M1930.3 1852.4v-29.5M1934.6 1852.4v-33.2M1939.0 1852.4v-48.7M1943.3 1852.4v-55.8M1947.6 1852.4v-64.0M1951.9 1852.4v-53.4M1956.2 1852.4v-64.0M1960.6 1852.4v-61.3M1964.9 1852.4v-38.9M1969.2 1852.4v-39.5M1973.5 1852.4v-40.8M1977.8 1852.4v-28.7M1982.2 1852.4v-33.6M1986.5 1852.4v-22.2M1990.8 1852.4v-37.1M1995.1 1852.4v-40.0M1999.4 1852.4v-46.9M2003.8 1852.4v-54.9M2008.1 1852.4v-53.8M2012.4 1852.4v-48.9M2016.7 1852.4v-31.1M2021.0 1852.4v-28.5M2025.4 1852.4v-16.0M2029.7 1852.4v-24.5M2034.0 1852.4v-27.1M2038.3 1852.4v-29.9M2042.6 1852.4v-34.0M2047.0 1852.4v-37.2M2051.3 1852.4v-56.5M2055.6 1852.4v-46.0M2059.9 1852.4v-36.4M2064.2 1852.4v-46.2M2068.6 1852.4v-37.8M2072.9 1852.4v-24.7M2077.2 1852.4v-29.8M2081.5 1852.4v-23.9M2085.8 1852.4v-18.3M2090.2 1852.4v-27.4M2094.5 1852.4v-43.4M2098.8 1852.4v-42.2M2103.1 1852.4v-56.5M2107.4 1852.4v-48.2M2111.8 1852.4v-35.4M2116.1 1852.4v-27.8M2120.4 1852.4v-24.4M2124.7 1852.4v-15.0M2129.0 1852.4v-17.6M2133.4 1852.4v-22.0M2137.7 1852.4v-22.5M2142.0 1852.4v-33.3M2146.3 1852.4v-26.3M2150.6 1852.4v-39.6M2155.0 1852.4v-40.3M2159.3 1852.4v-32.3M2163.6 1852.4v-33.7M2167.9 1852.4v-29.2M2172.2 1852.4v-19.6M2176.6 1852.4v-19.5M2180.9 1852.4v-13.1M2185.2 1852.4v-12.5M2189.5 1852.4v-15.6M2193.8 1852.4v-21.1M2198.2 1852.4v-25.1M2202.5 1852.4v-27.7M2206.8 1852.4v-34.9M2211.1 1852.4v-30.0M2215.4 1852.4v-32.1M2219.8 1852.4v-29.2M2224.1 1852.4v-17.8M2228.4 1852.4v-12.7M2232.7 1852.4v-10.4M2237.0 1852.4v-22.5M2241.4 1852.4v-42.1M2245.7 1852.4v-64.0M2250.0 1852.4v-45.5M2254.3 1852.4v-47.7M2258.6 1852.4v-35.9M2263.0 1852.4v-21.9M2267.3 1852.4v-16.3M2271.6 1852.4v-29.4M2275.9 1852.4v-31.3M2280.2 1852.4v-41.7M2284.6 1852.4v-59.8M2288.9 1852.4v-56.1M2293.2 1852.4v-41.0M2297.5 1852.4v-34.4M2301.8 1852.4v-18.4M2306.2 1852.4v-13.6M2310.5 1852.4v-22.6M2314.8 1852.4v-40.4M2319.1 1852.4v-41.0M2323.4 1852.4v-60.1M2327.8 1852.4v-50.1M2332.1 1852.4v-51.2M2336.4 1852.4v-46.2M2340.7 1852.4v-31.0M2345.0 1852.4v-16.4M2349.4 1852.4v-16.7M2353.7 1852.4v-27.2M2358.0 1852.4v-21.5M2362.3 1852.4v-36.0M2366.6 1852.4v-37.4M2371.0 1852.4v-40.4M2375.3 1852.4v-40.9M2379.6 1852.4v-30.6M2383.9 1852.4v-29.3M2388.2 1852.4v-29.1M2392.6 1852.4v-24.3M2396.9 1852.4v-17.4M2401.2 1852.4v-15.7M2405.5 1852.4v-7.6M2409.8 1852.4v-20.3M2414.2 1852.4v-28.9M2418.5 1852.4v-44.5M2422.8 1852.4v-64.0M2427.1 1852.4v-58.2M2431.4 1852.4v-36.9M2435.8 1852.4v-32.0M2440.1 1852.4v-21.7M2444.4 1852.4v-18.7M2448.7 1852.4v-22.1M2453.0 1852.4v-24.5M2457.4 1852.4v-31.2M2461.7 1852.4v-44.4M2466.0 1852.4v-42.0M2470.3 1852.4v-52.7M2474.6 1852.4v-56.8M2479.0 1852.4v-48.8M2483.3 1852.4v-46.0M2487.6 1852.4v-38.0M2491.9 1852.4v-31.2M2496.2 1852.4v-31.4M2500.6 1852.4v-24.7M2504.9 1852.4v-20.8M2509.2 1852.4v-24.6M2513.5 1852.4v-40.9M2517.8 1852.4v-39.3M2522.2 1852.4v-40.5M2526.5 1852.4v-41.8M2530.8 1852.4v-36.9M2535.1 1852.4v-36.9M2539.4 1852.4v-19.7M2543.8 1852.4v-11.6M2548.1 1852.4v-17.9M2552.4 1852.4v-31.9M2556.7 1852.4v-38.6M2561.0 1852.4v-54.1M2565.4 1852.4v-35.7M2569.7 1852.4v-20.3M2574.0 1852.4v-7.0M2578.3 1852.4v-28.0M2582.6 1852.4v-52.8M2587.0 1852.4v-42.6M2591.3 1852.4v-32.1M2595.6 1852.4v-23.6M2599.9 1852.4v-21.9M2604.2 1852.4v-13.6M2608.6 1852.4v-15.7M2612.9 1852.4v-27.5M2617.2 1852.4v-36.1M2621.5 1852.4v-42.1M2625.8 1852.4v-55.3M2630.2 1852.4v-48.9M2634.5 1852.4v-33.6M2638.8 1852.4v-41.1M2643.1 1852.4v-27.4M2647.4 1852.4v-24.3M2651.8 1852.4v-26.1M2656.1 1852.4v-14.9M2660.4 1852.4v-12.8M2664.7 1852.4v-24.6M2669.0 1852.4v-29.9M2673.4 1852.4v-38.7M2677.7 1852.4v-43.1M2682.0 1852.4v-34.8M2686.3 1852.4v-31.2M2690.6 1852.4v-26.2M2695.0 1852.4v-21.2M2699.3 1852.4v-15.5M2703.6 1852.4v-39.1M2707.9 1852.4v-64.0M2712.2 1852.4v-48.5M2716.6 1852.4v-45.4M2720.9 1852.4v-35.1M2725.2 1852.4v-33.8M2729.5 1852.4v-22.7M2733.8 1852.4v-27.2M2738.2 1852.4v-37.5M2742.5 1852.4v-38.1M2746.8 1852.4v-40.8M2751.1 1852.4v-52.8M2755.4 1852.4v-33.3M2759.8 1852.4v-18.5M2764.1 1852.4v-6.3M2768.4 1852.4v-13.4M2772.7 1852.4v-21.9M2777.0 1852.4v-20.5M2781.4 1852.4v-33.4M2785.7 1852.4v-31.0M2790.0 1852.4v-43.6M2794.3 1852.4v-44.9M2798.6 1852.4v-43.1M2803.0 1852.4v-42.5M2807.3 1852.4v-32.4M2811.6 1852.4v-27.1M2815.9 1852.4v-25.6M2820.2 1852.4v-25.1M2824.6 1852.4v-34.7M2828.9 1852.4v-48.0M2833.2 1852.4v-46.5M2837.5 1852.4v-44.8M2841.8 1852.4v-29.8M2846.2 1852.4v-31.5M2850.5 1852.4v-24.1M2854.8 1852.4v-24.7M2859.1 1852.4v-31.2M2863.4 1852.4v-26.5M2867.8 1852.4v-33.5M2872.1 1852.4v-48.1M2876.4 1852.4v-41.9M2880.7 1852.4v-52.1M2885.0 1852.4v-61.2M2889.4 1852.4v-52.4M2893.7 1852.4v-58.8M2898.0 1852.4v-36.3M2902.3 1852.4v-37.8M2906.6 1852.4v-29.8M2911.0 1852.4v-27.1M2915.3 1852.4v-20.3M2919.6 1852.4v-13.8M2923.9 1852.4v-35.5M2928.2 1852.4v-38.6M2932.6 1852.4v-60.8M2936.9 1852.4v-46.6M2941.2 1852.4v-37.0M2945.5 1852.4v-21.5M2949.8 1852.4v-5.6M2954.2 1852.4v-12.0M2958.5 1852.4v-25.5M2962.8 1852.4v-26.1M2967.1 1852.4v-48.2M2971.4 1852.4v-45.2M2975.8 1852.4v-34.3M2980.1 1852.4v-24.2M2984.4 1852.4v-16.0M2988.7 1852.4v-25.4M2993.0 1852.4v-32.8M2997.4 1852.4v-37.9M3001.7 1852.4v-44.0M3006.0 1852.4v-40.7M3010.3 1852.4v-37.4M3014.6 1852.4v-32.2M3019.0 1852.4v-29.1M3023.3 1852.4v-28.7M3027.6 1852.4v-23.6M3031.9 1852.4v-21.2M3036.2 1852.4v-39.2M3040.6 1852.4v-46.3M3044.9 1852.4v-44.8M3049.2 1852.4v-36.0M3053.5 1852.4v-23.4M3057.8 1852.4v-7.2M3062.2 1852.4v-19.5M3066.5 1852.4v-34.9M3070.8 1852.4v-45.6M3075.1 1852.4v-58.2M3079.4 1852.4v-48.7M3083.8 1852.4v-58.3M3088.1 1852.4v-46.6M3092.4 1852.4v-47.9M3096.7 1852.4v-29.2M3101.0 1852.4v-28.5M3105.4 1852.4v-18.0M3109.7 1852.4v-31.6M3114.0 1852.4v-37.5M3118.3 1852.4v-32.1" stroke="#1187b0" stroke-width="2.8" fill="none"/></svg><div style="left:774.6px;top:1750.4px;width:111.0px;height:31.6px;background:rgba(255,255,255,0.2);border-radius:5px;"></div><div class="t" style="top:1751.6px;font-size:23.8px;line-height:30px;color:#eaf4f5;font-weight:400;white-space:nowrap;left:-169.9px;width:2000px;text-align:center;">变速 2.0x</div><div style="left:895.4px;top:1750.4px;width:104.8px;height:31.6px;background:rgba(255,255,255,0.2);border-radius:5px;"></div><div class="t" style="top:1751.6px;font-size:23.8px;line-height:30px;color:#eaf4f5;font-weight:400;white-space:nowrap;left:-52.2px;width:2000px;text-align:center;">录音.wav</div><div style="left:1010.0px;top:1750.4px;width:106.6px;height:31.6px;background:rgba(255,255,255,0.2);border-radius:5px;"></div><div class="t" style="top:1751.6px;font-size:23.6px;line-height:30px;color:#eaf4f5;font-weight:400;white-space:nowrap;left:63.3px;width:2000px;text-align:center;"><span style="letter-spacing:0.6px">00:00:00</span></div><div style="left:770.0px;top:1871.5px;width:2510.0px;height:106.5px;background:#0e3260;border-radius:7px;overflow:hidden;"></div><svg style="left:770.5px;top:1905px" width="2509.5" height="73" viewBox="770.5 1905 2509.5 73"><path d="M772.6 1978.0v-37.6M776.9 1978.0v-44.4M781.2 1978.0v-37.7M785.5 1978.0v-38.8M789.8 1978.0v-32.1M794.2 1978.0v-32.6M798.5 1978.0v-25.5M802.8 1978.0v-23.4M807.1 1978.0v-21.3M811.4 1978.0v-23.3M815.8 1978.0v-38.2M820.1 1978.0v-54.5M824.4 1978.0v-59.2M828.7 1978.0v-50.0M833.0 1978.0v-47.1M837.4 1978.0v-27.5M841.7 1978.0v-33.0M846.0 1978.0v-21.9M850.3 1978.0v-30.1M854.6 1978.0v-37.5M859.0 1978.0v-32.2M863.3 1978.0v-36.7M867.6 1978.0v-34.5M871.9 1978.0v-35.1M876.2 1978.0v-35.7M880.6 1978.0v-29.2M884.9 1978.0v-32.8M889.2 1978.0v-45.9M893.5 1978.0v-58.5M897.8 1978.0v-57.8M902.2 1978.0v-64.0M906.5 1978.0v-53.8M910.8 1978.0v-40.1M915.1 1978.0v-32.7M919.4 1978.0v-21.7M923.8 1978.0v-32.7M928.1 1978.0v-38.9M932.4 1978.0v-48.5M936.7 1978.0v-36.9M941.0 1978.0v-23.9M945.4 1978.0v-20.9M949.7 1978.0v-5.1M954.0 1978.0v-13.2M958.3 1978.0v-25.5M962.6 1978.0v-32.1M967.0 1978.0v-48.7M971.3 1978.0v-40.8M975.6 1978.0v-32.7M979.9 1978.0v-32.0M984.2 1978.0v-25.4M988.6 1978.0v-19.2M992.9 1978.0v-16.7M997.2 1978.0v-8.1M1001.5 1978.0v-15.8M1005.8 1978.0v-25.9M1010.2 1978.0v-34.8M1014.5 1978.0v-33.7M1018.8 1978.0v-33.8M1023.1 1978.0v-58.8M1027.4 1978.0v-56.1M1031.8 1978.0v-54.7M1036.1 1978.0v-47.3M1040.4 1978.0v-44.8M1044.7 1978.0v-41.0M1049.0 1978.0v-32.6M1053.4 1978.0v-26.3M1057.7 1978.0v-32.8M1062.0 1978.0v-23.9M1066.3 1978.0v-27.3M1070.6 1978.0v-44.4M1075.0 1978.0v-64.0M1079.3 1978.0v-47.0M1083.6 1978.0v-30.1M1087.9 1978.0v-25.5M1092.2 1978.0v-16.7M1096.6 1978.0v-31.6M1100.9 1978.0v-37.1M1105.2 1978.0v-44.0M1109.5 1978.0v-57.0M1113.8 1978.0v-50.4M1118.2 1978.0v-54.2M1122.5 1978.0v-42.3M1126.8 1978.0v-26.2M1131.1 1978.0v-10.8M1135.4 1978.0v-14.0M1139.8 1978.0v-15.2M1144.1 1978.0v-19.1M1148.4 1978.0v-23.2M1152.7 1978.0v-30.6M1157.0 1978.0v-39.5M1161.4 1978.0v-34.3M1165.7 1978.0v-42.6M1170.0 1978.0v-42.5M1174.3 1978.0v-39.2M1178.6 1978.0v-26.9M1183.0 1978.0v-36.8M1187.3 1978.0v-29.1M1191.6 1978.0v-22.9M1195.9 1978.0v-19.5M1200.2 1978.0v-34.0M1204.6 1978.0v-48.6M1208.9 1978.0v-46.6M1213.2 1978.0v-41.9M1217.5 1978.0v-38.4M1221.8 1978.0v-26.7M1226.2 1978.0v-23.8M1230.5 1978.0v-21.9M1234.8 1978.0v-12.4M1239.1 1978.0v-22.0M1243.4 1978.0v-23.7M1247.8 1978.0v-39.0M1252.1 1978.0v-45.8M1256.4 1978.0v-42.1M1260.7 1978.0v-55.8M1265.0 1978.0v-64.0M1269.4 1978.0v-56.1M1273.7 1978.0v-48.7M1278.0 1978.0v-34.4M1282.3 1978.0v-31.8M1286.6 1978.0v-21.8M1291.0 1978.0v-17.5M1295.3 1978.0v-21.0M1299.6 1978.0v-35.2M1303.9 1978.0v-37.1M1308.2 1978.0v-37.5M1312.6 1978.0v-47.5M1316.9 1978.0v-38.6M1321.2 1978.0v-47.5M1325.5 1978.0v-31.9M1329.8 1978.0v-38.4M1334.2 1978.0v-30.7M1338.5 1978.0v-34.1M1342.8 1978.0v-22.7M1347.1 1978.0v-26.0M1351.4 1978.0v-34.3M1355.8 1978.0v-34.2M1360.1 1978.0v-38.6M1364.4 1978.0v-50.4M1368.7 1978.0v-50.8M1373.0 1978.0v-37.5M1377.4 1978.0v-28.4M1381.7 1978.0v-29.7M1386.0 1978.0v-28.1M1390.3 1978.0v-16.1M1394.6 1978.0v-15.8M1399.0 1978.0v-20.1M1403.3 1978.0v-22.7M1407.6 1978.0v-27.6M1411.9 1978.0v-37.9M1416.2 1978.0v-46.5M1420.6 1978.0v-46.0M1424.9 1978.0v-37.8M1429.2 1978.0v-38.9M1433.5 1978.0v-28.0M1437.8 1978.0v-23.4M1442.2 1978.0v-16.3M1446.5 1978.0v-25.6M1450.8 1978.0v-31.5M1455.1 1978.0v-32.9M1459.4 1978.0v-38.0M1463.8 1978.0v-59.3M1468.1 1978.0v-46.6M1472.4 1978.0v-44.3M1476.7 1978.0v-39.1M1481.0 1978.0v-49.5M1485.4 1978.0v-39.0M1489.7 1978.0v-39.6M1494.0 1978.0v-30.1M1498.3 1978.0v-21.8M1502.6 1978.0v-28.7M1507.0 1978.0v-39.4M1511.3 1978.0v-36.9M1515.6 1978.0v-41.2M1519.9 1978.0v-29.6M1524.2 1978.0v-20.2M1528.6 1978.0v-18.4M1532.9 1978.0v-14.6M1537.2 1978.0v-19.5M1541.5 1978.0v-37.7M1545.8 1978.0v-48.6M1550.2 1978.0v-50.0M1554.5 1978.0v-64.0M1558.8 1978.0v-56.5M1563.1 1978.0v-46.3M1567.4 1978.0v-33.2M1571.8 1978.0v-39.0M1576.1 1978.0v-30.7M1580.4 1978.0v-19.0M1584.7 1978.0v-12.2M1589.0 1978.0v-5.1M1593.4 1978.0v-12.5M1597.7 1978.0v-20.2M1602.0 1978.0v-22.0M1606.3 1978.0v-26.0M1610.6 1978.0v-36.0M1615.0 1978.0v-45.0M1619.3 1978.0v-38.9M1623.6 1978.0v-36.6M1627.9 1978.0v-37.6M1632.2 1978.0v-24.3M1636.6 1978.0v-28.9M1640.9 1978.0v-18.7M1645.2 1978.0v-17.6M1649.5 1978.0v-10.1M1653.8 1978.0v-4.5M1658.2 1978.0v-10.2M1662.5 1978.0v-17.2M1666.8 1978.0v-25.4M1671.1 1978.0v-40.2M1675.4 1978.0v-49.5M1679.8 1978.0v-40.6M1684.1 1978.0v-30.0M1688.4 1978.0v-29.3M1692.7 1978.0v-24.1M1697.0 1978.0v-15.4M1701.4 1978.0v-21.8M1705.7 1978.0v-36.7M1710.0 1978.0v-41.8M1714.3 1978.0v-36.1M1718.6 1978.0v-34.2M1723.0 1978.0v-24.4M1727.3 1978.0v-28.4M1731.6 1978.0v-16.5M1735.9 1978.0v-14.6M1740.2 1978.0v-17.6M1744.6 1978.0v-15.3M1748.9 1978.0v-27.0M1753.2 1978.0v-30.1M1757.5 1978.0v-30.4M1761.8 1978.0v-39.2M1766.2 1978.0v-36.7M1770.5 1978.0v-32.1M1774.8 1978.0v-30.9M1779.1 1978.0v-29.7M1783.4 1978.0v-32.8M1787.8 1978.0v-27.8M1792.1 1978.0v-16.8M1796.4 1978.0v-15.0M1800.7 1978.0v-21.5M1805.0 1978.0v-31.6M1809.4 1978.0v-42.8M1813.7 1978.0v-53.5M1818.0 1978.0v-40.2M1822.3 1978.0v-42.2M1826.6 1978.0v-27.8M1831.0 1978.0v-27.3M1835.3 1978.0v-15.1M1839.6 1978.0v-7.0M1843.9 1978.0v-13.7M1848.2 1978.0v-16.1M1852.6 1978.0v-20.0M1856.9 1978.0v-22.9M1861.2 1978.0v-29.6M1865.5 1978.0v-33.2M1869.8 1978.0v-47.1M1874.2 1978.0v-34.5M1878.5 1978.0v-34.0M1882.8 1978.0v-22.9M1887.1 1978.0v-15.9M1891.4 1978.0v-12.7M1895.8 1978.0v-7.8M1900.1 1978.0v-14.4M1904.4 1978.0v-14.1M1908.7 1978.0v-17.8M1913.0 1978.0v-20.7M1917.4 1978.0v-25.4M1921.7 1978.0v-39.2M1926.0 1978.0v-43.6M1930.3 1978.0v-35.8M1934.6 1978.0v-28.2M1939.0 1978.0v-29.5M1943.3 1978.0v-25.1M1947.6 1978.0v-15.4M1951.9 1978.0v-12.6M1956.2 1978.0v-8.5M1960.6 1978.0v-9.4M1964.9 1978.0v-18.0M1969.2 1978.0v-22.5M1973.5 1978.0v-28.5M1977.8 1978.0v-29.5M1982.2 1978.0v-33.6M1986.5 1978.0v-38.9M1990.8 1978.0v-36.1M1995.1 1978.0v-38.6M1999.4 1978.0v-29.9M2003.8 1978.0v-26.9M2008.1 1978.0v-19.7M2012.4 1978.0v-17.1M2016.7 1978.0v-12.5M2021.0 1978.0v-11.1M2025.4 1978.0v-14.1M2029.7 1978.0v-21.5M2034.0 1978.0v-26.1M2038.3 1978.0v-27.4M2042.6 1978.0v-30.2M2047.0 1978.0v-42.9M2051.3 1978.0v-49.8M2055.6 1978.0v-55.6M2059.9 1978.0v-43.9M2064.2 1978.0v-37.6M2068.6 1978.0v-22.8M2072.9 1978.0v-19.6M2077.2 1978.0v-15.8M2081.5 1978.0v-6.1M2085.8 1978.0v-12.0M2090.2 1978.0v-21.8M2094.5 1978.0v-35.2M2098.8 1978.0v-31.9M2103.1 1978.0v-38.8M2107.4 1978.0v-54.8M2111.8 1978.0v-64.0M2116.1 1978.0v-49.3M2120.4 1978.0v-36.2M2124.7 1978.0v-33.1M2129.0 1978.0v-15.2M2133.4 1978.0v-6.7M2137.7 1978.0v-17.3M2142.0 1978.0v-29.8M2146.3 1978.0v-40.6M2150.6 1978.0v-40.8M2155.0 1978.0v-47.9M2159.3 1978.0v-58.8M2163.6 1978.0v-42.7M2167.9 1978.0v-35.8M2172.2 1978.0v-31.7M2176.6 1978.0v-20.5M2180.9 1978.0v-4.9M2185.2 1978.0v-12.5M2189.5 1978.0v-28.0M2193.8 1978.0v-42.5M2198.2 1978.0v-51.0M2202.5 1978.0v-53.0M2206.8 1978.0v-54.2M2211.1 1978.0v-47.7M2215.4 1978.0v-40.6M2219.8 1978.0v-30.4M2224.1 1978.0v-29.7M2228.4 1978.0v-20.5M2232.7 1978.0v-10.7M2237.0 1978.0v-20.4M2241.4 1978.0v-24.5M2245.7 1978.0v-36.7M2250.0 1978.0v-54.5M2254.3 1978.0v-56.4M2258.6 1978.0v-51.2M2263.0 1978.0v-50.2M2267.3 1978.0v-31.7M2271.6 1978.0v-30.6M2275.9 1978.0v-26.5M2280.2 1978.0v-20.7M2284.6 1978.0v-15.9M2288.9 1978.0v-10.4M2293.2 1978.0v-21.1M2297.5 1978.0v-29.1M2301.8 1978.0v-41.5M2306.2 1978.0v-49.1M2310.5 1978.0v-50.3M2314.8 1978.0v-36.2M2319.1 1978.0v-29.0M2323.4 1978.0v-20.1M2327.8 1978.0v-13.8M2332.1 1978.0v-8.4M2336.4 1978.0v-13.1M2340.7 1978.0v-23.9M2345.0 1978.0v-29.4M2349.4 1978.0v-39.7M2353.7 1978.0v-43.1M2358.0 1978.0v-47.3M2362.3 1978.0v-40.8M2366.6 1978.0v-32.1M2371.0 1978.0v-40.9M2375.3 1978.0v-39.6M2379.6 1978.0v-36.3M2383.9 1978.0v-34.0M2388.2 1978.0v-22.3M2392.6 1978.0v-27.5M2396.9 1978.0v-20.6M2401.2 1978.0v-29.2M2405.5 1978.0v-44.8M2409.8 1978.0v-44.5M2414.2 1978.0v-36.0M2418.5 1978.0v-21.5M2422.8 1978.0v-14.6M2427.1 1978.0v-6.2M2431.4 1978.0v-12.4M2435.8 1978.0v-21.4M2440.1 1978.0v-22.7M2444.4 1978.0v-29.0M2448.7 1978.0v-34.7M2453.0 1978.0v-54.6M2457.4 1978.0v-47.1M2461.7 1978.0v-31.6M2466.0 1978.0v-18.1M2470.3 1978.0v-6.3M2474.6 1978.0v-15.9M2479.0 1978.0v-17.4M2483.3 1978.0v-22.3M2487.6 1978.0v-34.2M2491.9 1978.0v-47.1M2496.2 1978.0v-30.9M2500.6 1978.0v-31.0M2504.9 1978.0v-18.3M2509.2 1978.0v-15.5M2513.5 1978.0v-23.0M2517.8 1978.0v-33.4M2522.2 1978.0v-44.5M2526.5 1978.0v-50.9M2530.8 1978.0v-31.7M2535.1 1978.0v-28.8M2539.4 1978.0v-21.0M2543.8 1978.0v-26.3M2548.1 1978.0v-24.1M2552.4 1978.0v-31.8M2556.7 1978.0v-30.9M2561.0 1978.0v-32.3M2565.4 1978.0v-40.0M2569.7 1978.0v-42.8M2574.0 1978.0v-35.5M2578.3 1978.0v-29.6M2582.6 1978.0v-25.1M2587.0 1978.0v-23.8M2591.3 1978.0v-21.3M2595.6 1978.0v-17.3M2599.9 1978.0v-21.7M2604.2 1978.0v-24.7M2608.6 1978.0v-29.6M2612.9 1978.0v-39.8M2617.2 1978.0v-43.7M2621.5 1978.0v-48.4M2625.8 1978.0v-51.1M2630.2 1978.0v-43.2M2634.5 1978.0v-31.3M2638.8 1978.0v-33.1M2643.1 1978.0v-32.1M2647.4 1978.0v-32.1M2651.8 1978.0v-26.5M2656.1 1978.0v-19.2M2660.4 1978.0v-29.5M2664.7 1978.0v-38.7M2669.0 1978.0v-48.1M2673.4 1978.0v-48.0M2677.7 1978.0v-48.6M2682.0 1978.0v-49.4M2686.3 1978.0v-54.6M2690.6 1978.0v-52.1M2695.0 1978.0v-32.6M2699.3 1978.0v-32.1M2703.6 1978.0v-25.2M2707.9 1978.0v-29.9M2712.2 1978.0v-30.1M2716.6 1978.0v-32.0M2720.9 1978.0v-34.8M2725.2 1978.0v-36.7M2729.5 1978.0v-42.7M2733.8 1978.0v-31.3M2738.2 1978.0v-34.8M2742.5 1978.0v-28.4M2746.8 1978.0v-31.1M2751.1 1978.0v-34.3M2755.4 1978.0v-41.5M2759.8 1978.0v-37.2M2764.1 1978.0v-22.6M2768.4 1978.0v-13.9M2772.7 1978.0v-9.8M2777.0 1978.0v-27.1M2781.4 1978.0v-40.7M2785.7 1978.0v-57.6M2790.0 1978.0v-41.3M2794.3 1978.0v-41.1M2798.6 1978.0v-33.4M2803.0 1978.0v-19.5M2807.3 1978.0v-30.4M2811.6 1978.0v-40.3M2815.9 1978.0v-41.6M2820.2 1978.0v-41.5M2824.6 1978.0v-40.3M2828.9 1978.0v-30.1M2833.2 1978.0v-18.7M2837.5 1978.0v-29.4M2841.8 1978.0v-35.3M2846.2 1978.0v-43.7M2850.5 1978.0v-48.7M2854.8 1978.0v-59.6M2859.1 1978.0v-52.2M2863.4 1978.0v-31.3M2867.8 1978.0v-28.3M2872.1 1978.0v-17.0M2876.4 1978.0v-16.9M2880.7 1978.0v-15.3M2885.0 1978.0v-22.3M2889.4 1978.0v-29.1M2893.7 1978.0v-31.2M2898.0 1978.0v-31.5M2902.3 1978.0v-41.4M2906.6 1978.0v-40.4M2911.0 1978.0v-41.6M2915.3 1978.0v-41.1M2919.6 1978.0v-30.4M2923.9 1978.0v-28.5M2928.2 1978.0v-26.5M2932.6 1978.0v-41.5M2936.9 1978.0v-64.0M2941.2 1978.0v-57.4M2945.5 1978.0v-49.5M2949.8 1978.0v-28.4M2954.2 1978.0v-25.2M2958.5 1978.0v-14.6M2962.8 1978.0v-28.4M2967.1 1978.0v-33.1M2971.4 1978.0v-49.8M2975.8 1978.0v-51.3M2980.1 1978.0v-64.0M2984.4 1978.0v-40.8M2988.7 1978.0v-44.6M2993.0 1978.0v-32.3M2997.4 1978.0v-28.3M3001.7 1978.0v-23.5M3006.0 1978.0v-26.5M3010.3 1978.0v-39.2M3014.6 1978.0v-37.0M3019.0 1978.0v-42.6M3023.3 1978.0v-45.7M3027.6 1978.0v-62.6M3031.9 1978.0v-58.4M3036.2 1978.0v-56.2M3040.6 1978.0v-49.1M3044.9 1978.0v-42.0M3049.2 1978.0v-29.2M3053.5 1978.0v-21.4M3057.8 1978.0v-17.3M3062.2 1978.0v-12.7M3066.5 1978.0v-22.4M3070.8 1978.0v-27.3M3075.1 1978.0v-42.3M3079.4 1978.0v-49.4M3083.8 1978.0v-31.5M3088.1 1978.0v-36.7M3092.4 1978.0v-33.8M3096.7 1978.0v-20.1M3101.0 1978.0v-19.3M3105.4 1978.0v-16.6M3109.7 1978.0v-10.8M3114.0 1978.0v-18.1M3118.3 1978.0v-20.4M3122.6 1978.0v-28.6M3127.0 1978.0v-45.3M3131.3 1978.0v-42.9M3135.6 1978.0v-52.6M3139.9 1978.0v-62.5M3144.2 1978.0v-46.3M3148.6 1978.0v-40.7M3152.9 1978.0v-33.5M3157.2 1978.0v-28.4M3161.5 1978.0v-17.9M3165.8 1978.0v-19.6M3170.2 1978.0v-30.3M3174.5 1978.0v-41.7M3178.8 1978.0v-52.7M3183.1 1978.0v-52.9M3187.4 1978.0v-63.0M3191.8 1978.0v-58.8M3196.1 1978.0v-54.7M3200.4 1978.0v-54.7M3204.7 1978.0v-51.3M3209.0 1978.0v-46.2M3213.4 1978.0v-28.1M3217.7 1978.0v-32.2M3222.0 1978.0v-23.8M3226.3 1978.0v-26.3M3230.6 1978.0v-27.4M3235.0 1978.0v-44.0M3239.3 1978.0v-48.6M3243.6 1978.0v-46.0M3247.9 1978.0v-49.5M3252.2 1978.0v-40.2M3256.6 1978.0v-51.0M3260.9 1978.0v-44.1M3265.2 1978.0v-31.0M3269.5 1978.0v-34.0M3273.8 1978.0v-36.1M3278.2 1978.0v-23.6" stroke="#1b7fcb" stroke-width="2.8" fill="none"/></svg><div style="left:774.6px;top:1876.0px;width:55.8px;height:31.6px;background:rgba(255,255,255,0.2);border-radius:5px;"></div><div class="t" style="top:1877.0px;font-size:23.4px;line-height:30px;color:#fff;font-weight:500;white-space:nowrap;left:-197.5px;width:2000px;text-align:center;">音效</div><div style="left:1923.8px;top:1345.0px;width:2.4px;height:697.4px;background:#fff;"></div><svg class="ic" style="left:1911px;top:1331px" width="28" height="38" viewBox="1911 1331 28 38"><path d="M1915.6 1335.6H1934.4V1354.4A9.4 9.4 0 0 1 1915.6 1354.4Z" fill="#1c1c1d" stroke="#fff" stroke-width="4.4" stroke-linejoin="round"/></svg>
</div>
</body></html>
